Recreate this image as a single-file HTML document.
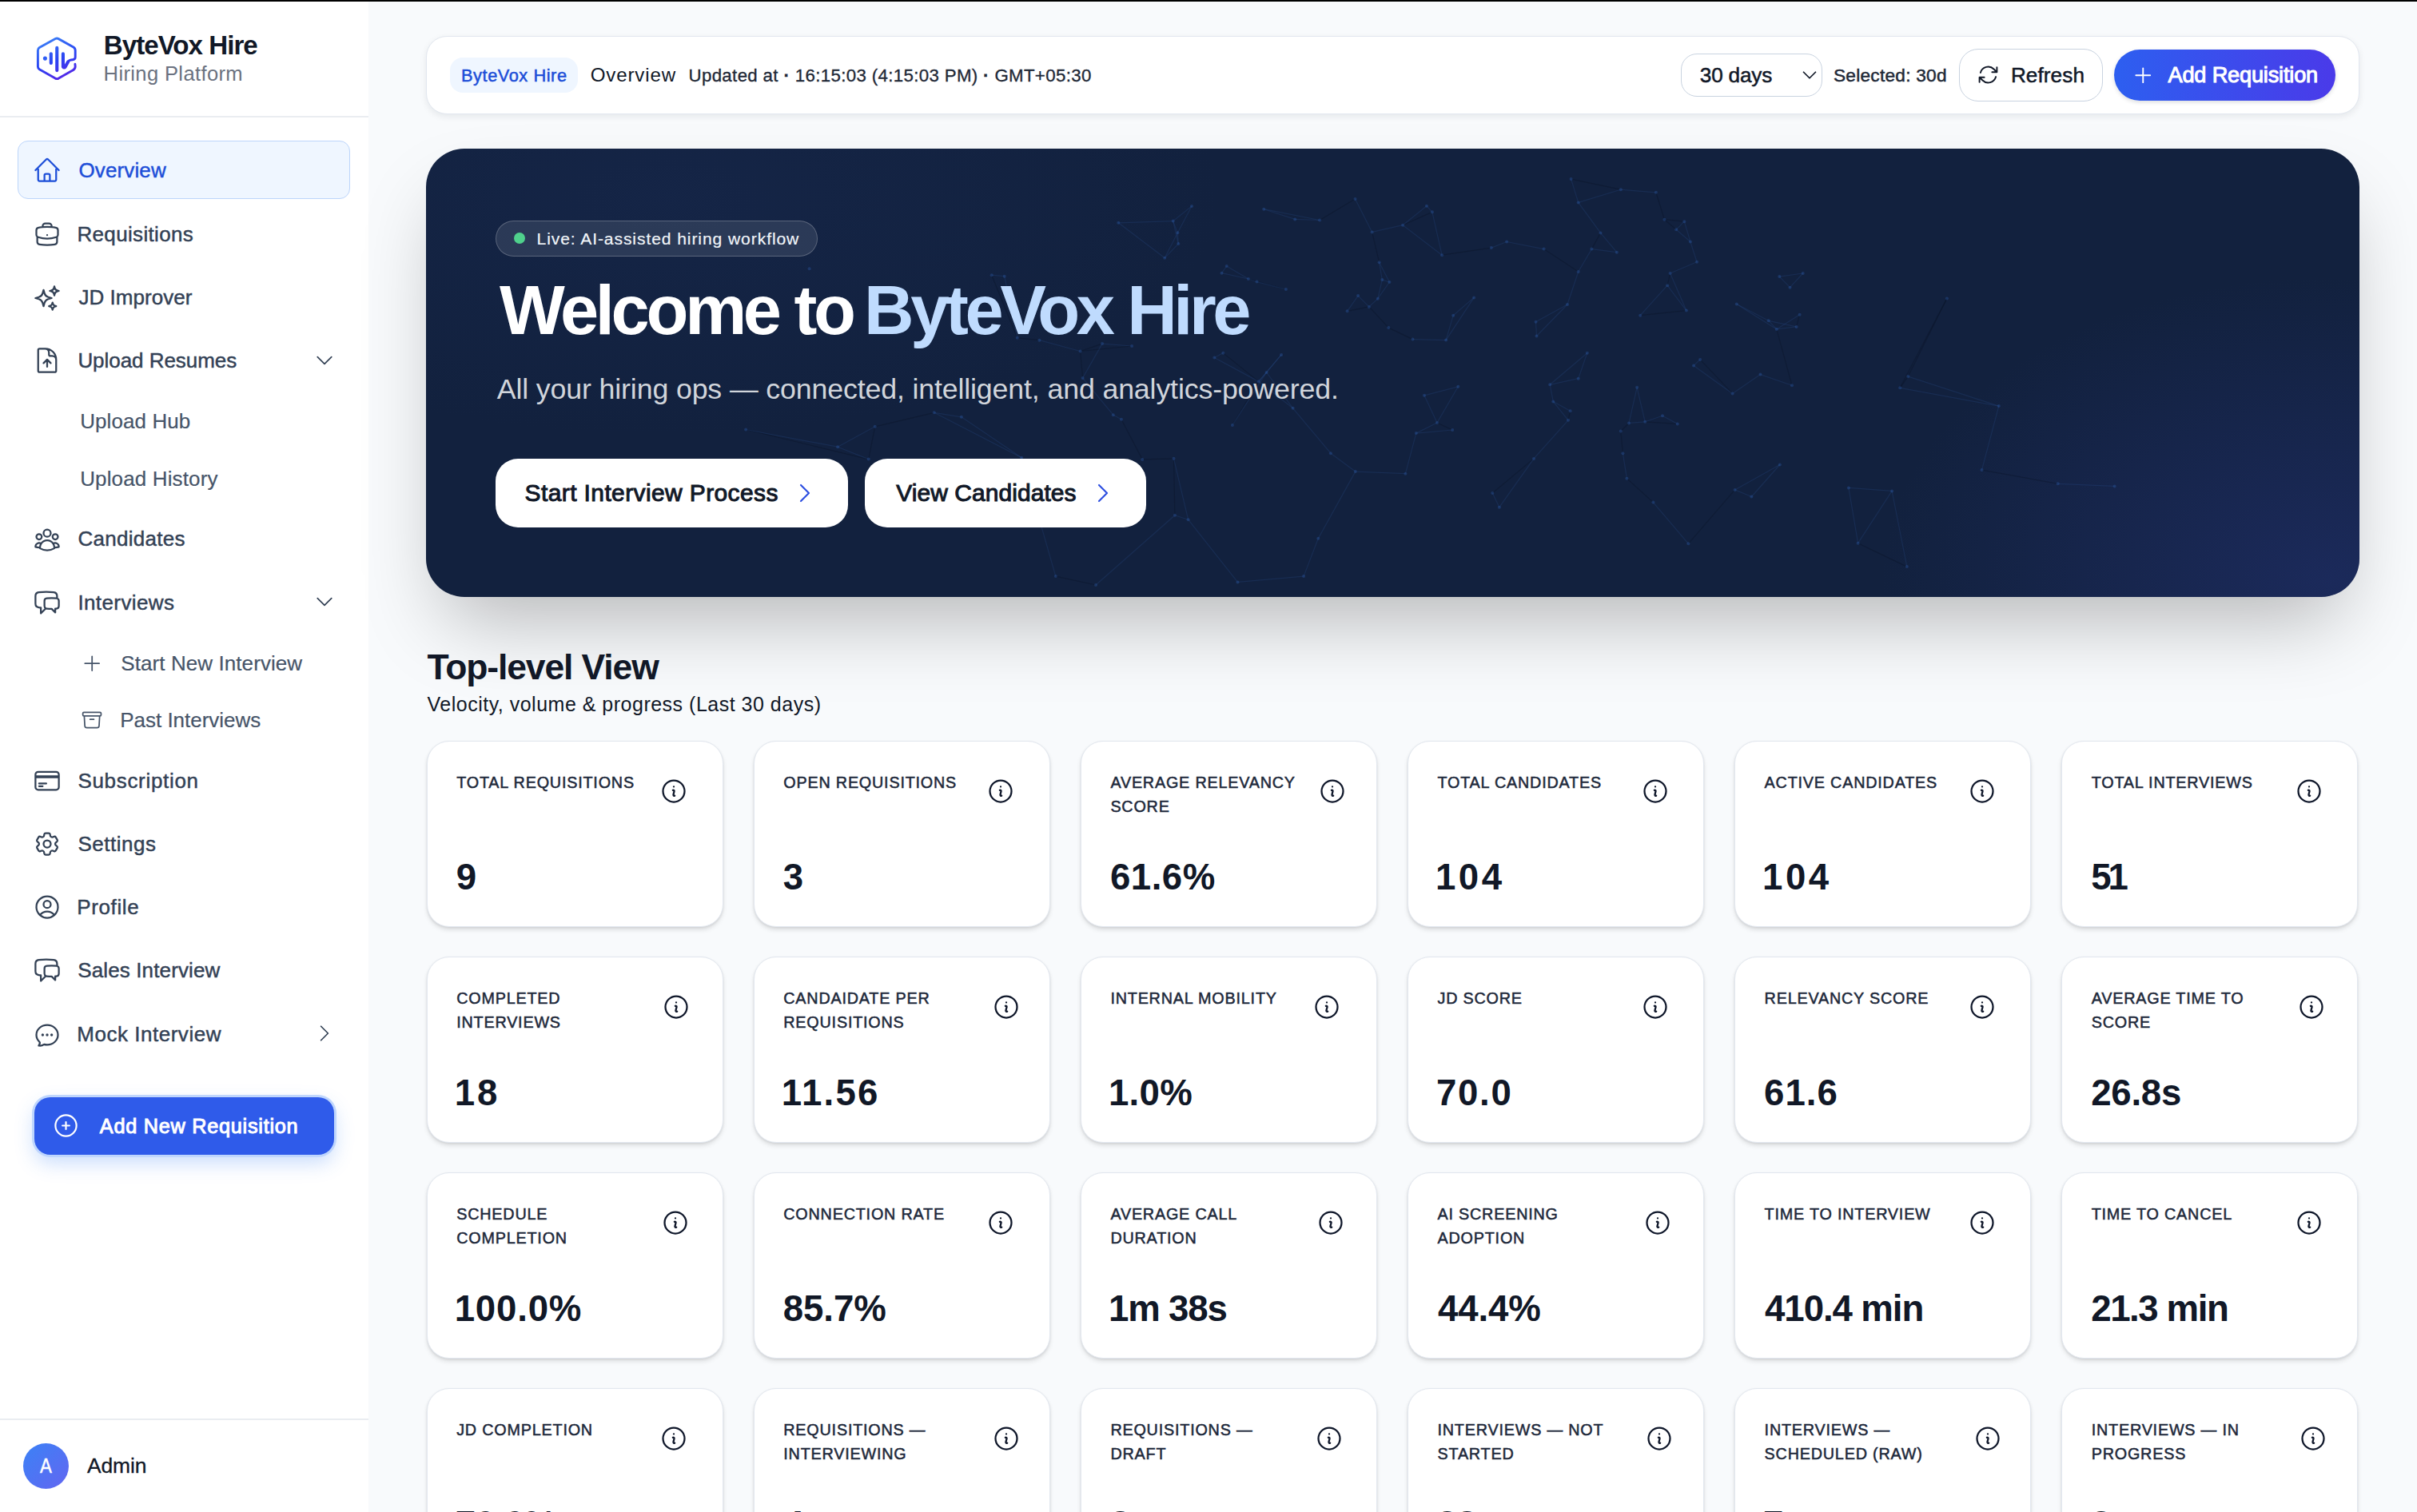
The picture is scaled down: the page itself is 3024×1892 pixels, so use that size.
<!DOCTYPE html><html><head><meta charset="utf-8"><style>
html,body{margin:0;padding:0;width:3024px;height:1892px;overflow:hidden}
body{background:#f8fafc;font-family:"Liberation Sans",sans-serif;position:relative}
.a{position:absolute}
.tx{position:absolute;white-space:nowrap;font-family:"Liberation Sans",sans-serif}
svg.i{position:absolute;fill:none;stroke-linecap:round;stroke-linejoin:round}
.card{position:absolute;background:#fff;border-radius:28px;box-sizing:border-box;border:1px solid #e2e7ef;box-shadow:0 4px 6px -1px rgba(0,0,0,.13),0 1px 3px rgba(0,0,0,.08)}

</style></head><body>
<div class="a" style="left:0;top:0;width:3024px;height:2px;background:#000;z-index:50"></div>
<div class="a" style="left:0;top:0;width:461px;height:1892px;background:#fff"></div>
<div class="a" style="left:0;top:145px;width:461px;height:2px;background:#eaedf1"></div>
<div class="a" style="left:0;top:1775px;width:461px;height:2px;background:#eaedf1"></div>
<svg class="a" style="left:40px;top:40px" width="70" height="70" viewBox="0 0 70 70"><defs><linearGradient id="lg" gradientUnits="userSpaceOnUse" x1="22" y1="8" x2="44" y2="60"><stop offset="0" stop-color="#3a7cf6"/><stop offset=".5" stop-color="#2a44f2"/><stop offset="1" stop-color="#5a22e6"/></linearGradient></defs>
<g fill="none" stroke="url(#lg)" stroke-linecap="round" stroke-linejoin="round">
<path stroke-width="2.9" d="M53.9 40.3 L54.2 43.1 Q54.2 46.6 50.9 48.1 L33.3 58.1 Q31.25 59.2 29.2 58.1 L9.3 46.8 Q7.4 45.6 7.4 43.6 L7.4 23.1 Q7.4 20.6 9.3 19.4 L29.2 8.6 Q31.25 7.5 33.3 8.6 L51.9 19 Q54.2 20.4 54.2 23 L54.2 31.5 Q54.2 34.5 50.9 34.7 L48.6 35 Q46.3 35.3 45.2 37.3"/>
<path stroke-width="4.1" d="M45.2 37.3 L41.7 43.5 Q40.3 45.6 38.9 43.5 L38.9 27.3"/>
<path stroke-width="4.1" d="M23.8 27.3 V38.9"/><path stroke-width="4.1" d="M31.25 19.9 V48.1"/>
</g><circle cx="16.4" cy="33.1" r="2.55" fill="#2f5ef5"/></svg>
<div class="a" style="left:22px;top:176px;width:416px;height:73px;box-sizing:border-box;border:1px solid #bcd5fb;background:#eff6ff;border-radius:13px"></div>
<svg class="i" style="left:40.5px;top:195px;" width="36" height="36" viewBox="0 0 24 24" stroke="#1d4ed8" stroke-width="1.5"><path d="m2.25 12 8.954-8.955c.44-.439 1.152-.439 1.591 0L21.75 12M4.5 9.75v10.125c0 .621.504 1.125 1.125 1.125H9.75v-4.875c0-.621.504-1.125 1.125-1.125h2.25c.621 0 1.125.504 1.125 1.125V21h4.125c.621 0 1.125-.504 1.125-1.125V9.75M8.25 21h8.25"/></svg>
<svg class="i" style="left:40.5px;top:275px;" width="36" height="36" viewBox="0 0 24 24" stroke="#334155" stroke-width="1.5"><path d="M20.25 14.15v4.25c0 1.094-.787 2.036-1.872 2.18-2.087.277-4.216.42-6.378.42s-4.291-.143-6.378-.42c-1.085-.144-1.872-1.086-1.872-2.18v-4.25m16.5 0a2.18 2.18 0 0 0 .75-1.661V8.706c0-1.081-.768-2.015-1.837-2.175a48.114 48.114 0 0 0-3.413-.387m4.5 8.006c-.194.165-.42.295-.673.38A23.978 23.978 0 0 1 12 15.75c-2.648 0-5.195-.429-7.577-1.22a2.016 2.016 0 0 1-.673-.38m0 0A2.18 2.18 0 0 1 3 12.489V8.706c0-1.081.768-2.015 1.837-2.175a48.111 48.111 0 0 1 3.413-.387m7.5 0V5.25A2.25 2.25 0 0 0 13.5 3h-3a2.25 2.25 0 0 0-2.25 2.25v.894m7.5 0a48.667 48.667 0 0 0-7.5 0M12 12.75h.008v.008H12v-.008Z"/></svg>
<svg class="i" style="left:40.5px;top:354.5px;" width="36" height="36" viewBox="0 0 24 24" stroke="#334155" stroke-width="1.5"><path d="M9.813 15.904 9 18.75l-.813-2.846a4.5 4.5 0 0 0-3.09-3.09L2.25 12l2.846-.813a4.5 4.5 0 0 0 3.09-3.09L9 5.25l.813 2.846a4.5 4.5 0 0 0 3.09 3.09L15.75 12l-2.846.813a4.5 4.5 0 0 0-3.09 3.09ZM18.259 8.715 18 9.75l-.259-1.035a3.375 3.375 0 0 0-2.455-2.456L14.25 6l1.036-.259a3.375 3.375 0 0 0 2.455-2.456L18 2.25l.259 1.035a3.375 3.375 0 0 0 2.456 2.456L21.75 6l-1.035.259a3.375 3.375 0 0 0-2.456 2.456ZM16.894 20.567 16.5 21.75l-.394-1.183a2.25 2.25 0 0 0-1.423-1.423L13.5 18.75l1.183-.394a2.25 2.25 0 0 0 1.423-1.423l.394-1.183.394 1.183a2.25 2.25 0 0 0 1.423 1.423l1.183.394-1.183.394a2.25 2.25 0 0 0-1.423 1.423Z"/></svg>
<svg class="i" style="left:40.5px;top:432.5px;" width="36" height="36" viewBox="0 0 24 24" stroke="#334155" stroke-width="1.5"><path d="M19.5 14.25v-2.625a3.375 3.375 0 0 0-3.375-3.375h-1.5A1.125 1.125 0 0 1 13.5 7.125v-1.5a3.375 3.375 0 0 0-3.375-3.375H8.25m6.75 12-3-3m0 0-3 3m3-3v6m-1.5-15H5.625c-.621 0-1.125.504-1.125 1.125v17.25c0 .621.504 1.125 1.125 1.125h12.75c.621 0 1.125-.504 1.125-1.125V11.25a9 9 0 0 0-9-9Z"/></svg>
<svg class="i" style="left:392.4px;top:436.9px;" width="28" height="28" viewBox="0 0 24 24" stroke="#334155" stroke-width="1.5"><path d="m19.5 8.25-7.5 7.5-7.5-7.5"/></svg>
<svg class="i" style="left:40.5px;top:656.5px;" width="36" height="36" viewBox="0 0 24 24" stroke="#334155" stroke-width="1.5"><path d="M18 18.72a9.094 9.094 0 0 0 3.741-.479 3 3 0 0 0-4.682-2.72m.94 3.198.001.031c0 .225-.012.447-.037.666A11.944 11.944 0 0 1 12 21c-2.17 0-4.207-.576-5.963-1.584A6.062 6.062 0 0 1 6 18.719m12 0a5.971 5.971 0 0 0-.941-3.197m0 0A5.995 5.995 0 0 0 12 12.75a5.995 5.995 0 0 0-5.058 2.772m0 0a3 3 0 0 0-4.681 2.72 8.986 8.986 0 0 0 3.74.477m.94-3.197a5.971 5.971 0 0 0-.94 3.197M15 6.75a3 3 0 1 1-6 0 3 3 0 0 1 6 0Zm6 3a2.25 2.25 0 1 1-4.5 0 2.25 2.25 0 0 1 4.5 0Zm-13.5 0a2.25 2.25 0 1 1-4.5 0 2.25 2.25 0 0 1 4.5 0Z"/></svg>
<svg class="i" style="left:40.5px;top:735.5px;" width="36" height="36" viewBox="0 0 24 24" stroke="#334155" stroke-width="1.5"><path d="M20.25 8.511c.884.284 1.5 1.128 1.5 2.097v4.286c0 1.136-.847 2.1-1.98 2.193-.34.027-.68.052-1.02.072v3.091l-3-3c-1.354 0-2.694-.055-4.02-.163a2.115 2.115 0 0 1-.825-.242m9.345-8.334a2.126 2.126 0 0 0-.476-.095 48.64 48.64 0 0 0-8.048 0c-1.131.094-1.976 1.057-1.976 2.192v4.286c0 .837.46 1.58 1.155 1.951m9.345-8.334V6.637c0-1.621-1.152-3.026-2.76-3.235A48.455 48.455 0 0 0 11.25 3c-2.115 0-4.198.137-6.24.402-1.608.209-2.76 1.614-2.76 3.235v6.226c0 1.621 1.152 3.026 2.76 3.235.577.075 1.157.14 1.74.194V21l4.155-4.155"/></svg>
<svg class="i" style="left:392.4px;top:739px;" width="28" height="28" viewBox="0 0 24 24" stroke="#334155" stroke-width="1.5"><path d="m19.5 8.25-7.5 7.5-7.5-7.5"/></svg>
<svg class="i" style="left:101.4px;top:815.6px;" width="28.4" height="28.4" viewBox="0 0 24 24" stroke="#475569" stroke-width="1.5"><path d="M12 4.5v15m7.5-7.5h-15"/></svg>
<svg class="i" style="left:101.2px;top:887.1px;" width="28.1" height="28.1" viewBox="0 0 24 24" stroke="#475569" stroke-width="1.5"><path d="m20.25 7.5-.625 10.632a2.25 2.25 0 0 1-2.247 2.118H6.622a2.25 2.25 0 0 1-2.247-2.118L3.75 7.5M10 11.25h4M3.375 7.5h17.25c.621 0 1.125-.504 1.125-1.125v-1.5c0-.621-.504-1.125-1.125-1.125H3.375c-.621 0-1.125.504-1.125 1.125v1.5c0 .621.504 1.125 1.125 1.125Z"/></svg>
<svg class="i" style="left:40.5px;top:958.5px;" width="36" height="36" viewBox="0 0 24 24" stroke="#334155" stroke-width="1.5"><path d="M2.25 8.25h19.5M2.25 9h19.5m-16.5 5.25h6m-6 2.25h3m-3.75 3h15a2.25 2.25 0 0 0 2.25-2.25V6.75A2.25 2.25 0 0 0 19.5 4.5h-15a2.25 2.25 0 0 0-2.25 2.25v10.5A2.25 2.25 0 0 0 4.5 19.5Z"/></svg>
<svg class="i" style="left:40.5px;top:1038px;" width="36" height="36" viewBox="0 0 24 24" stroke="#334155" stroke-width="1.5"><path d="M9.594 3.94c.09-.542.56-.94 1.11-.94h2.593c.55 0 1.02.398 1.11.94l.213 1.281c.063.374.313.686.645.87.074.04.147.083.22.127.325.196.72.257 1.075.124l1.217-.456a1.125 1.125 0 0 1 1.37.49l1.296 2.247a1.125 1.125 0 0 1-.26 1.431l-1.003.827c-.293.241-.438.613-.43.992a7.723 7.723 0 0 1 0 .255c-.008.378.137.75.43.991l1.004.827c.424.35.534.955.26 1.43l-1.298 2.247a1.125 1.125 0 0 1-1.369.491l-1.217-.456c-.355-.133-.75-.072-1.076.124a6.47 6.47 0 0 1-.22.128c-.331.183-.581.495-.644.869l-.213 1.281c-.09.543-.56.94-1.11.94h-2.594c-.55 0-1.019-.398-1.11-.94l-.213-1.281c-.062-.374-.312-.686-.644-.87a6.52 6.52 0 0 1-.22-.127c-.325-.196-.72-.257-1.076-.124l-1.217.456a1.125 1.125 0 0 1-1.369-.49l-1.297-2.247a1.125 1.125 0 0 1 .26-1.431l1.004-.827c.292-.24.437-.613.43-.991a6.932 6.932 0 0 1 0-.255c.007-.38-.138-.751-.43-.992l-1.004-.827a1.125 1.125 0 0 1-.26-1.43l1.297-2.247a1.125 1.125 0 0 1 1.37-.491l1.216.456c.356.133.751.072 1.076-.124.072-.044.146-.086.22-.128.332-.183.582-.495.644-.869l.214-1.28Z M15 12a3 3 0 1 1-6 0 3 3 0 0 1 6 0Z"/></svg>
<svg class="i" style="left:40.5px;top:1117px;" width="36" height="36" viewBox="0 0 24 24" stroke="#334155" stroke-width="1.5"><path d="M17.982 18.725A7.488 7.488 0 0 0 12 15.75a7.488 7.488 0 0 0-5.982 2.975m11.963 0a9 9 0 1 0-11.963 0m11.963 0A8.966 8.966 0 0 1 12 21a8.966 8.966 0 0 1-5.982-2.275M15 9.75a3 3 0 1 1-6 0 3 3 0 0 1 6 0Z"/></svg>
<svg class="i" style="left:40.5px;top:1196px;" width="36" height="36" viewBox="0 0 24 24" stroke="#334155" stroke-width="1.5"><path d="M20.25 8.511c.884.284 1.5 1.128 1.5 2.097v4.286c0 1.136-.847 2.1-1.98 2.193-.34.027-.68.052-1.02.072v3.091l-3-3c-1.354 0-2.694-.055-4.02-.163a2.115 2.115 0 0 1-.825-.242m9.345-8.334a2.126 2.126 0 0 0-.476-.095 48.64 48.64 0 0 0-8.048 0c-1.131.094-1.976 1.057-1.976 2.192v4.286c0 .837.46 1.58 1.155 1.951m9.345-8.334V6.637c0-1.621-1.152-3.026-2.76-3.235A48.455 48.455 0 0 0 11.25 3c-2.115 0-4.198.137-6.24.402-1.608.209-2.76 1.614-2.76 3.235v6.226c0 1.621 1.152 3.026 2.76 3.235.577.075 1.157.14 1.74.194V21l4.155-4.155"/></svg>
<svg class="i" style="left:40.5px;top:1277px;" width="36" height="36" viewBox="0 0 24 24" stroke="#334155" stroke-width="1.5"><path d="M8.625 12a.375.375 0 1 1-.75 0 .375.375 0 0 1 .75 0Zm0 0H8.25m4.125 0a.375.375 0 1 1-.75 0 .375.375 0 0 1 .75 0Zm0 0H12m4.125 0a.375.375 0 1 1-.75 0 .375.375 0 0 1 .75 0Zm0 0h-.375M21 12c0 4.556-4.03 8.25-9 8.25a9.764 9.764 0 0 1-2.555-.337A5.972 5.972 0 0 1 5.41 20.97a5.969 5.969 0 0 1-.474-.065 4.48 4.48 0 0 0 .978-2.025c.09-.457-.133-.901-.467-1.226C3.93 16.178 3 14.189 3 12c0-4.556 4.03-8.25 9-8.25s9 3.694 9 8.25Z"/></svg>
<svg class="i" style="left:392px;top:1279.4px;" width="28" height="28" viewBox="0 0 24 24" stroke="#334155" stroke-width="1.5"><path d="m8.25 4.5 7.5 7.5-7.5 7.5"/></svg>
<div class="a" style="left:43px;top:1373px;width:375px;height:72px;background:#2f5bea;border-radius:20px;box-shadow:0 0 0 3px #bfd6fd,0 10px 24px rgba(59,130,246,.28)"></div>
<svg class="i" style="left:65.3px;top:1391.2px;" width="35" height="35" viewBox="0 0 24 24" stroke="#ffffff" stroke-width="1.5"><path d="M12 9v6m3-3H9m12 0a9 9 0 1 1-18 0 9 9 0 0 1 18 0Z"/></svg>
<div class="a" style="left:29px;top:1806px;width:57px;height:57px;border-radius:50%;background:linear-gradient(135deg,#3b82f6,#6366f1)"></div>
<div class="a" style="left:533px;top:45px;width:2419px;height:98px;background:#fff;border-radius:26px;box-sizing:border-box;border:1px solid #e2e7ef;box-shadow:0 3px 8px rgba(15,23,42,.08)"></div>
<div class="a" style="left:563px;top:72px;width:160px;height:44px;background:#eff6ff;border-radius:16px"></div>
<div class="a" style="left:2103px;top:67px;width:177px;height:54px;box-sizing:border-box;border:1.5px solid #c9d3e0;border-radius:20px;background:#fff"></div>
<svg class="i" style="left:2251.75px;top:82px;" width="24" height="24" viewBox="0 0 24 24" stroke="#111827" stroke-width="1.7"><path d="m19.5 8.25-7.5 7.5-7.5-7.5"/></svg>
<div class="a" style="left:2451px;top:61px;width:180px;height:66px;box-sizing:border-box;border:1.5px solid #c9d3e0;border-radius:24px;background:#fff"></div>
<svg class="i" style="left:2472.8px;top:78.9px;" width="29" height="29" viewBox="0 0 24 24" stroke="#111827" stroke-width="1.6"><path d="M16.023 9.348h4.992v-.001M2.985 19.644v-4.992m0 0h4.992m-4.993 0 3.181 3.183a8.25 8.25 0 0 0 13.803-3.7M4.031 9.865a8.25 8.25 0 0 1 13.803-3.7l3.181 3.182m0-4.991v4.99"/></svg>
<div class="a" style="left:2645px;top:62px;width:277px;height:64px;border-radius:32px;background:linear-gradient(90deg,#2d5ff0,#4a3ae9);box-shadow:0 2px 5px rgba(30,41,59,.16)"></div>
<svg class="i" style="left:2667.2px;top:80.4px;" width="28.5" height="28.5" viewBox="0 0 24 24" stroke="#ffffff" stroke-width="1.6"><path d="M12 4.5v15m7.5-7.5h-15"/></svg>
<div class="a" style="left:533px;top:186px;width:2419px;height:561px;border-radius:48px;overflow:hidden;background:#12213e;box-shadow:0 50px 100px -24px rgba(0,0,0,.28)"><div class="a" style="left:0;top:0;width:100%;height:100%;background:radial-gradient(ellipse 560px 380px at 2380px 540px,rgba(40,54,130,.42),rgba(40,54,130,0) 100%)"></div><div class="a" style="left:0;top:0;width:100%;height:100%;background:radial-gradient(ellipse 700px 300px at 300px 60px,rgba(30,50,100,.22),rgba(30,50,100,0) 100%)"></div><svg class="a" style="left:0;top:0" width="2419" height="561"><line x1="1432.6" y1="38.1" x2="1494.8" y2="51.2" stroke="#070d1c" stroke-opacity="0.28" stroke-width="1.2"/><line x1="1432.6" y1="38.1" x2="1441.7" y2="67.4" stroke="#3a6ab8" stroke-opacity="0.16" stroke-width="1.2"/><line x1="1494.8" y1="51.2" x2="1441.7" y2="67.4" stroke="#3a6ab8" stroke-opacity="0.16" stroke-width="1.2"/><line x1="1494.8" y1="51.2" x2="1538.9" y2="54.8" stroke="#3a6ab8" stroke-opacity="0.16" stroke-width="1.2"/><line x1="1441.7" y1="67.4" x2="1469.5" y2="105.4" stroke="#3a6ab8" stroke-opacity="0.16" stroke-width="1.2"/><line x1="1538.9" y1="54.8" x2="1549.5" y2="88.7" stroke="#070d1c" stroke-opacity="0.28" stroke-width="1.2"/><line x1="1469.5" y1="105.4" x2="1458.4" y2="125.6" stroke="#070d1c" stroke-opacity="0.28" stroke-width="1.2"/><line x1="1469.5" y1="105.4" x2="1489.8" y2="129.7" stroke="#3a6ab8" stroke-opacity="0.16" stroke-width="1.2"/><line x1="1549.5" y1="88.7" x2="1574.3" y2="91.2" stroke="#070d1c" stroke-opacity="0.28" stroke-width="1.2"/><line x1="1549.5" y1="88.7" x2="1564.2" y2="101.3" stroke="#070d1c" stroke-opacity="0.28" stroke-width="1.2"/><line x1="1574.3" y1="91.2" x2="1564.2" y2="101.3" stroke="#3a6ab8" stroke-opacity="0.16" stroke-width="1.2"/><line x1="1574.3" y1="91.2" x2="1581.9" y2="116.5" stroke="#3a6ab8" stroke-opacity="0.16" stroke-width="1.2"/><line x1="1564.2" y1="101.3" x2="1581.9" y2="116.5" stroke="#3a6ab8" stroke-opacity="0.16" stroke-width="1.2"/><line x1="1581.9" y1="116.5" x2="1590.0" y2="141.8" stroke="#3a6ab8" stroke-opacity="0.16" stroke-width="1.2"/><line x1="1590.0" y1="141.8" x2="1556.6" y2="156.0" stroke="#3a6ab8" stroke-opacity="0.16" stroke-width="1.2"/><line x1="1556.6" y1="156.0" x2="1553.1" y2="171.2" stroke="#070d1c" stroke-opacity="0.28" stroke-width="1.2"/><line x1="1556.6" y1="156.0" x2="1576.9" y2="202.6" stroke="#3a6ab8" stroke-opacity="0.16" stroke-width="1.2"/><line x1="1553.1" y1="171.2" x2="1576.9" y2="202.6" stroke="#3a6ab8" stroke-opacity="0.16" stroke-width="1.2"/><line x1="1553.1" y1="171.2" x2="1519.2" y2="208.7" stroke="#3a6ab8" stroke-opacity="0.16" stroke-width="1.2"/><line x1="1352.1" y1="116.5" x2="1398.6" y2="125.6" stroke="#3a6ab8" stroke-opacity="0.16" stroke-width="1.2"/><line x1="1352.1" y1="116.5" x2="1332.8" y2="124.1" stroke="#3a6ab8" stroke-opacity="0.16" stroke-width="1.2"/><line x1="1398.6" y1="125.6" x2="1441.7" y2="154.0" stroke="#070d1c" stroke-opacity="0.28" stroke-width="1.2"/><line x1="1458.4" y1="125.6" x2="1489.8" y2="129.7" stroke="#3a6ab8" stroke-opacity="0.16" stroke-width="1.2"/><line x1="1458.4" y1="125.6" x2="1441.7" y2="154.0" stroke="#3a6ab8" stroke-opacity="0.16" stroke-width="1.2"/><line x1="1441.7" y1="154.0" x2="1428.0" y2="195.0" stroke="#3a6ab8" stroke-opacity="0.16" stroke-width="1.2"/><line x1="1332.8" y1="124.1" x2="1271.1" y2="133.2" stroke="#070d1c" stroke-opacity="0.28" stroke-width="1.2"/><line x1="1271.1" y1="133.2" x2="1258.9" y2="79.3" stroke="#3a6ab8" stroke-opacity="0.16" stroke-width="1.2"/><line x1="1271.1" y1="133.2" x2="1222.1" y2="95.7" stroke="#3a6ab8" stroke-opacity="0.16" stroke-width="1.2"/><line x1="1693.3" y1="160.1" x2="1722.7" y2="156.0" stroke="#3a6ab8" stroke-opacity="0.16" stroke-width="1.2"/><line x1="1693.3" y1="160.1" x2="1706.5" y2="173.7" stroke="#3a6ab8" stroke-opacity="0.16" stroke-width="1.2"/><line x1="1722.7" y1="156.0" x2="1706.5" y2="173.7" stroke="#3a6ab8" stroke-opacity="0.16" stroke-width="1.2"/><line x1="1679.7" y1="215.3" x2="1689.8" y2="225.9" stroke="#3a6ab8" stroke-opacity="0.16" stroke-width="1.2"/><line x1="1679.7" y1="215.3" x2="1714.6" y2="222.9" stroke="#3a6ab8" stroke-opacity="0.16" stroke-width="1.2"/><line x1="1679.7" y1="215.3" x2="1639.7" y2="194.5" stroke="#3a6ab8" stroke-opacity="0.16" stroke-width="1.2"/><line x1="1689.8" y1="225.9" x2="1714.6" y2="222.9" stroke="#3a6ab8" stroke-opacity="0.16" stroke-width="1.2"/><line x1="1689.8" y1="225.9" x2="1718.6" y2="207.7" stroke="#3a6ab8" stroke-opacity="0.16" stroke-width="1.2"/><line x1="1689.8" y1="225.9" x2="1639.7" y2="194.5" stroke="#3a6ab8" stroke-opacity="0.16" stroke-width="1.2"/><line x1="1689.8" y1="225.9" x2="1709.0" y2="296.3" stroke="#070d1c" stroke-opacity="0.28" stroke-width="1.2"/><line x1="1714.6" y1="222.9" x2="1718.6" y2="207.7" stroke="#070d1c" stroke-opacity="0.28" stroke-width="1.2"/><line x1="1576.9" y1="202.6" x2="1519.2" y2="208.7" stroke="#070d1c" stroke-opacity="0.28" stroke-width="1.2"/><line x1="1428.0" y1="195.0" x2="1388.5" y2="216.8" stroke="#3a6ab8" stroke-opacity="0.16" stroke-width="1.2"/><line x1="1428.0" y1="195.0" x2="1389.5" y2="234.5" stroke="#3a6ab8" stroke-opacity="0.16" stroke-width="1.2"/><line x1="1311.1" y1="186.4" x2="1285.2" y2="208.7" stroke="#3a6ab8" stroke-opacity="0.16" stroke-width="1.2"/><line x1="1311.1" y1="186.4" x2="1276.1" y2="239.6" stroke="#3a6ab8" stroke-opacity="0.16" stroke-width="1.2"/><line x1="1285.2" y1="208.7" x2="1276.1" y2="239.6" stroke="#3a6ab8" stroke-opacity="0.16" stroke-width="1.2"/><line x1="1276.1" y1="239.6" x2="1234.5" y2="238.6" stroke="#3a6ab8" stroke-opacity="0.16" stroke-width="1.2"/><line x1="1291.3" y1="297.8" x2="1249.0" y2="308.8" stroke="#3a6ab8" stroke-opacity="0.16" stroke-width="1.2"/><line x1="1291.3" y1="297.8" x2="1265.0" y2="343.0" stroke="#3a6ab8" stroke-opacity="0.16" stroke-width="1.2"/><line x1="1452.8" y1="255.8" x2="1441.7" y2="287.7" stroke="#3a6ab8" stroke-opacity="0.16" stroke-width="1.2"/><line x1="1452.8" y1="255.8" x2="1406.2" y2="295.3" stroke="#3a6ab8" stroke-opacity="0.16" stroke-width="1.2"/><line x1="1441.7" y1="287.7" x2="1406.2" y2="295.3" stroke="#3a6ab8" stroke-opacity="0.16" stroke-width="1.2"/><line x1="1515.1" y1="298.8" x2="1505.0" y2="343.4" stroke="#3a6ab8" stroke-opacity="0.16" stroke-width="1.2"/><line x1="1515.1" y1="298.8" x2="1525.2" y2="341.8" stroke="#3a6ab8" stroke-opacity="0.16" stroke-width="1.2"/><line x1="1586.0" y1="271.5" x2="1594.1" y2="263.9" stroke="#3a6ab8" stroke-opacity="0.16" stroke-width="1.2"/><line x1="1586.0" y1="271.5" x2="1634.6" y2="306.4" stroke="#3a6ab8" stroke-opacity="0.16" stroke-width="1.2"/><line x1="1594.1" y1="263.9" x2="1634.6" y2="306.4" stroke="#070d1c" stroke-opacity="0.28" stroke-width="1.2"/><line x1="1634.6" y1="306.4" x2="1669.5" y2="282.6" stroke="#3a6ab8" stroke-opacity="0.16" stroke-width="1.2"/><line x1="1709.0" y1="296.3" x2="1669.5" y2="282.6" stroke="#3a6ab8" stroke-opacity="0.16" stroke-width="1.2"/><line x1="1406.2" y1="295.3" x2="1410.3" y2="316.5" stroke="#3a6ab8" stroke-opacity="0.16" stroke-width="1.2"/><line x1="1410.3" y1="316.5" x2="1431.6" y2="328.2" stroke="#3a6ab8" stroke-opacity="0.16" stroke-width="1.2"/><line x1="1410.3" y1="316.5" x2="1429.0" y2="339.8" stroke="#3a6ab8" stroke-opacity="0.16" stroke-width="1.2"/><line x1="1431.6" y1="328.2" x2="1429.0" y2="339.8" stroke="#070d1c" stroke-opacity="0.28" stroke-width="1.2"/><line x1="1429.0" y1="339.8" x2="1386.0" y2="387.9" stroke="#3a6ab8" stroke-opacity="0.16" stroke-width="1.2"/><line x1="1505.0" y1="343.4" x2="1525.2" y2="341.8" stroke="#3a6ab8" stroke-opacity="0.16" stroke-width="1.2"/><line x1="1505.0" y1="343.4" x2="1494.8" y2="353.5" stroke="#070d1c" stroke-opacity="0.28" stroke-width="1.2"/><line x1="1525.2" y1="341.8" x2="1565.7" y2="344.4" stroke="#070d1c" stroke-opacity="0.28" stroke-width="1.2"/><line x1="1525.2" y1="341.8" x2="1547.0" y2="334.3" stroke="#3a6ab8" stroke-opacity="0.16" stroke-width="1.2"/><line x1="1565.7" y1="344.4" x2="1547.0" y2="334.3" stroke="#3a6ab8" stroke-opacity="0.16" stroke-width="1.2"/><line x1="1494.8" y1="353.5" x2="1497.4" y2="381.3" stroke="#070d1c" stroke-opacity="0.28" stroke-width="1.2"/><line x1="1497.4" y1="381.3" x2="1502.4" y2="412.7" stroke="#3a6ab8" stroke-opacity="0.16" stroke-width="1.2"/><line x1="1284.2" y1="352.0" x2="1238.8" y2="356.1" stroke="#3a6ab8" stroke-opacity="0.16" stroke-width="1.2"/><line x1="1284.2" y1="352.0" x2="1265.0" y2="343.0" stroke="#070d1c" stroke-opacity="0.28" stroke-width="1.2"/><line x1="1386.0" y1="387.9" x2="1334.3" y2="431.0" stroke="#070d1c" stroke-opacity="0.28" stroke-width="1.2"/><line x1="1386.0" y1="387.9" x2="1342.9" y2="448.7" stroke="#3a6ab8" stroke-opacity="0.16" stroke-width="1.2"/><line x1="1334.3" y1="431.0" x2="1342.9" y2="448.7" stroke="#3a6ab8" stroke-opacity="0.16" stroke-width="1.2"/><line x1="1502.4" y1="412.7" x2="1535.4" y2="442.6" stroke="#070d1c" stroke-opacity="0.28" stroke-width="1.2"/><line x1="1535.4" y1="442.6" x2="1579.4" y2="494.3" stroke="#3a6ab8" stroke-opacity="0.16" stroke-width="1.2"/><line x1="1579.4" y1="494.3" x2="1637.6" y2="426.9" stroke="#070d1c" stroke-opacity="0.28" stroke-width="1.2"/><line x1="1658.4" y1="435.5" x2="1637.6" y2="426.9" stroke="#3a6ab8" stroke-opacity="0.16" stroke-width="1.2"/><line x1="1658.4" y1="435.5" x2="1693.8" y2="395.5" stroke="#3a6ab8" stroke-opacity="0.16" stroke-width="1.2"/><line x1="1637.6" y1="426.9" x2="1693.8" y2="395.5" stroke="#3a6ab8" stroke-opacity="0.16" stroke-width="1.2"/><line x1="1779.9" y1="424.4" x2="1834.1" y2="428.4" stroke="#3a6ab8" stroke-opacity="0.16" stroke-width="1.2"/><line x1="1779.9" y1="424.4" x2="1791.6" y2="493.7" stroke="#3a6ab8" stroke-opacity="0.16" stroke-width="1.2"/><line x1="1834.1" y1="428.4" x2="1791.6" y2="493.7" stroke="#3a6ab8" stroke-opacity="0.16" stroke-width="1.2"/><line x1="1834.1" y1="428.4" x2="1852.8" y2="523.1" stroke="#3a6ab8" stroke-opacity="0.16" stroke-width="1.2"/><line x1="1791.6" y1="493.7" x2="1852.8" y2="523.1" stroke="#070d1c" stroke-opacity="0.28" stroke-width="1.2"/><line x1="1844.2" y1="299.3" x2="1967.8" y2="322.1" stroke="#3a6ab8" stroke-opacity="0.16" stroke-width="1.2"/><line x1="1844.2" y1="299.3" x2="1854.3" y2="285.1" stroke="#070d1c" stroke-opacity="0.28" stroke-width="1.2"/><line x1="1844.2" y1="299.3" x2="1902.9" y2="187.4" stroke="#070d1c" stroke-opacity="0.28" stroke-width="1.2"/><line x1="1967.8" y1="322.1" x2="1854.3" y2="285.1" stroke="#3a6ab8" stroke-opacity="0.16" stroke-width="1.2"/><line x1="1967.8" y1="322.1" x2="1946.5" y2="402.1" stroke="#3a6ab8" stroke-opacity="0.16" stroke-width="1.2"/><line x1="1854.3" y1="285.1" x2="1902.9" y2="187.4" stroke="#070d1c" stroke-opacity="0.28" stroke-width="1.2"/><line x1="1946.5" y1="402.1" x2="2041.7" y2="419.3" stroke="#070d1c" stroke-opacity="0.28" stroke-width="1.2"/><line x1="2041.7" y1="419.3" x2="2112.6" y2="422.4" stroke="#3a6ab8" stroke-opacity="0.16" stroke-width="1.2"/><line x1="1388.5" y1="216.8" x2="1389.5" y2="234.5" stroke="#3a6ab8" stroke-opacity="0.16" stroke-width="1.2"/><line x1="866.3" y1="92.8" x2="934.7" y2="90.6" stroke="#3a6ab8" stroke-opacity="0.16" stroke-width="1.2"/><line x1="866.3" y1="92.8" x2="924.2" y2="136.8" stroke="#3a6ab8" stroke-opacity="0.16" stroke-width="1.2"/><line x1="934.7" y1="90.6" x2="958.0" y2="72.0" stroke="#3a6ab8" stroke-opacity="0.16" stroke-width="1.2"/><line x1="934.7" y1="90.6" x2="941.3" y2="119.0" stroke="#3a6ab8" stroke-opacity="0.16" stroke-width="1.2"/><line x1="934.7" y1="90.6" x2="940.4" y2="105.2" stroke="#3a6ab8" stroke-opacity="0.16" stroke-width="1.2"/><line x1="958.0" y1="72.0" x2="940.4" y2="105.2" stroke="#3a6ab8" stroke-opacity="0.16" stroke-width="1.2"/><line x1="941.3" y1="119.0" x2="924.2" y2="136.8" stroke="#3a6ab8" stroke-opacity="0.16" stroke-width="1.2"/><line x1="941.3" y1="119.0" x2="940.4" y2="105.2" stroke="#3a6ab8" stroke-opacity="0.16" stroke-width="1.2"/><line x1="924.2" y1="136.8" x2="940.4" y2="105.2" stroke="#3a6ab8" stroke-opacity="0.16" stroke-width="1.2"/><line x1="1001.7" y1="147.0" x2="995.5" y2="155.7" stroke="#3a6ab8" stroke-opacity="0.16" stroke-width="1.2"/><line x1="1001.7" y1="147.0" x2="1028.9" y2="163.0" stroke="#3a6ab8" stroke-opacity="0.16" stroke-width="1.2"/><line x1="995.5" y1="155.7" x2="1028.9" y2="163.0" stroke="#3a6ab8" stroke-opacity="0.16" stroke-width="1.2"/><line x1="1028.9" y1="163.0" x2="1039.5" y2="166.6" stroke="#3a6ab8" stroke-opacity="0.16" stroke-width="1.2"/><line x1="1028.9" y1="163.0" x2="1075.9" y2="176.1" stroke="#070d1c" stroke-opacity="0.28" stroke-width="1.2"/><line x1="1039.5" y1="166.6" x2="1075.9" y2="176.1" stroke="#3a6ab8" stroke-opacity="0.16" stroke-width="1.2"/><line x1="1048.2" y1="75.7" x2="1087.2" y2="88.4" stroke="#3a6ab8" stroke-opacity="0.16" stroke-width="1.2"/><line x1="1048.2" y1="75.7" x2="1118.1" y2="89.5" stroke="#3a6ab8" stroke-opacity="0.16" stroke-width="1.2"/><line x1="1087.2" y1="88.4" x2="1118.1" y2="89.5" stroke="#3a6ab8" stroke-opacity="0.16" stroke-width="1.2"/><line x1="1118.1" y1="89.5" x2="1162.5" y2="62.9" stroke="#070d1c" stroke-opacity="0.28" stroke-width="1.2"/><line x1="1183.6" y1="104.4" x2="1162.5" y2="62.9" stroke="#3a6ab8" stroke-opacity="0.16" stroke-width="1.2"/><line x1="1183.6" y1="104.4" x2="1222.1" y2="95.7" stroke="#3a6ab8" stroke-opacity="0.16" stroke-width="1.2"/><line x1="1183.6" y1="104.4" x2="1192.6" y2="142.2" stroke="#070d1c" stroke-opacity="0.28" stroke-width="1.2"/><line x1="1251.9" y1="71.7" x2="1258.9" y2="79.3" stroke="#3a6ab8" stroke-opacity="0.16" stroke-width="1.2"/><line x1="1251.9" y1="71.7" x2="1222.1" y2="95.7" stroke="#3a6ab8" stroke-opacity="0.16" stroke-width="1.2"/><line x1="1258.9" y1="79.3" x2="1222.1" y2="95.7" stroke="#070d1c" stroke-opacity="0.28" stroke-width="1.2"/><line x1="1192.6" y1="142.2" x2="1196.3" y2="164.1" stroke="#3a6ab8" stroke-opacity="0.16" stroke-width="1.2"/><line x1="1192.6" y1="142.2" x2="1205.4" y2="167.0" stroke="#3a6ab8" stroke-opacity="0.16" stroke-width="1.2"/><line x1="1196.3" y1="164.1" x2="1190.8" y2="187.7" stroke="#3a6ab8" stroke-opacity="0.16" stroke-width="1.2"/><line x1="1196.3" y1="164.1" x2="1205.4" y2="167.0" stroke="#3a6ab8" stroke-opacity="0.16" stroke-width="1.2"/><line x1="1179.9" y1="197.9" x2="1190.8" y2="187.7" stroke="#3a6ab8" stroke-opacity="0.16" stroke-width="1.2"/><line x1="1179.9" y1="197.9" x2="1166.1" y2="184.1" stroke="#3a6ab8" stroke-opacity="0.16" stroke-width="1.2"/><line x1="1179.9" y1="197.9" x2="1152.6" y2="203.3" stroke="#070d1c" stroke-opacity="0.28" stroke-width="1.2"/><line x1="1179.9" y1="197.9" x2="1204.3" y2="224.1" stroke="#070d1c" stroke-opacity="0.28" stroke-width="1.2"/><line x1="1190.8" y1="187.7" x2="1205.4" y2="167.0" stroke="#3a6ab8" stroke-opacity="0.16" stroke-width="1.2"/><line x1="1166.1" y1="184.1" x2="1152.6" y2="203.3" stroke="#3a6ab8" stroke-opacity="0.16" stroke-width="1.2"/><line x1="1234.5" y1="238.6" x2="1204.3" y2="224.1" stroke="#070d1c" stroke-opacity="0.28" stroke-width="1.2"/><line x1="1249.0" y1="308.8" x2="1265.0" y2="343.0" stroke="#3a6ab8" stroke-opacity="0.16" stroke-width="1.2"/><line x1="1238.8" y1="356.1" x2="1265.0" y2="343.0" stroke="#3a6ab8" stroke-opacity="0.16" stroke-width="1.2"/><line x1="1238.8" y1="356.1" x2="1225.4" y2="406.7" stroke="#3a6ab8" stroke-opacity="0.16" stroke-width="1.2"/><line x1="1225.4" y1="406.7" x2="1162.8" y2="404.1" stroke="#3a6ab8" stroke-opacity="0.16" stroke-width="1.2"/><line x1="1162.8" y1="404.1" x2="1131.9" y2="381.2" stroke="#3a6ab8" stroke-opacity="0.16" stroke-width="1.2"/><line x1="1162.8" y1="404.1" x2="1116.3" y2="487.8" stroke="#3a6ab8" stroke-opacity="0.16" stroke-width="1.2"/><line x1="1131.9" y1="381.2" x2="1084.6" y2="324.8" stroke="#3a6ab8" stroke-opacity="0.16" stroke-width="1.2"/><line x1="1116.3" y1="487.8" x2="1098.1" y2="535.1" stroke="#3a6ab8" stroke-opacity="0.16" stroke-width="1.2"/><line x1="1098.1" y1="535.1" x2="1015.5" y2="542.4" stroke="#3a6ab8" stroke-opacity="0.16" stroke-width="1.2"/><line x1="1015.5" y1="542.4" x2="953.6" y2="464.2" stroke="#3a6ab8" stroke-opacity="0.16" stroke-width="1.2"/><line x1="787.8" y1="535.1" x2="838.0" y2="546.0" stroke="#070d1c" stroke-opacity="0.28" stroke-width="1.2"/><line x1="787.8" y1="535.1" x2="745.2" y2="386.7" stroke="#3a6ab8" stroke-opacity="0.16" stroke-width="1.2"/><line x1="838.0" y1="546.0" x2="936.9" y2="458.7" stroke="#3a6ab8" stroke-opacity="0.16" stroke-width="1.2"/><line x1="936.9" y1="458.7" x2="953.6" y2="464.2" stroke="#3a6ab8" stroke-opacity="0.16" stroke-width="1.2"/><line x1="936.9" y1="458.7" x2="935.5" y2="387.8" stroke="#070d1c" stroke-opacity="0.28" stroke-width="1.2"/><line x1="953.6" y1="464.2" x2="935.5" y2="387.8" stroke="#3a6ab8" stroke-opacity="0.16" stroke-width="1.2"/><line x1="935.5" y1="387.8" x2="896.2" y2="388.9" stroke="#070d1c" stroke-opacity="0.28" stroke-width="1.2"/><line x1="896.2" y1="388.9" x2="870.0" y2="338.7" stroke="#070d1c" stroke-opacity="0.28" stroke-width="1.2"/><line x1="859.8" y1="333.2" x2="870.0" y2="338.7" stroke="#3a6ab8" stroke-opacity="0.16" stroke-width="1.2"/><line x1="859.8" y1="333.2" x2="821.6" y2="287.0" stroke="#3a6ab8" stroke-opacity="0.16" stroke-width="1.2"/><line x1="1008.9" y1="345.9" x2="1041.7" y2="291.4" stroke="#070d1c" stroke-opacity="0.28" stroke-width="1.2"/><line x1="1008.9" y1="345.9" x2="1051.6" y2="280.0" stroke="#3a6ab8" stroke-opacity="0.16" stroke-width="1.2"/><line x1="1084.6" y1="324.8" x2="1041.7" y2="291.4" stroke="#3a6ab8" stroke-opacity="0.16" stroke-width="1.2"/><line x1="1084.6" y1="324.8" x2="1051.6" y2="280.0" stroke="#3a6ab8" stroke-opacity="0.16" stroke-width="1.2"/><line x1="986.4" y1="261.5" x2="997.3" y2="255.7" stroke="#3a6ab8" stroke-opacity="0.16" stroke-width="1.2"/><line x1="986.4" y1="261.5" x2="1041.7" y2="291.4" stroke="#3a6ab8" stroke-opacity="0.16" stroke-width="1.2"/><line x1="997.3" y1="255.7" x2="1041.7" y2="291.4" stroke="#070d1c" stroke-opacity="0.28" stroke-width="1.2"/><line x1="1041.7" y1="291.4" x2="1070.1" y2="257.9" stroke="#3a6ab8" stroke-opacity="0.16" stroke-width="1.2"/><line x1="1041.7" y1="291.4" x2="1051.6" y2="280.0" stroke="#3a6ab8" stroke-opacity="0.16" stroke-width="1.2"/><line x1="1070.1" y1="257.9" x2="1051.6" y2="280.0" stroke="#3a6ab8" stroke-opacity="0.16" stroke-width="1.2"/><line x1="821.6" y1="287.0" x2="846.0" y2="244.1" stroke="#3a6ab8" stroke-opacity="0.16" stroke-width="1.2"/><line x1="821.6" y1="287.0" x2="818.6" y2="253.5" stroke="#070d1c" stroke-opacity="0.28" stroke-width="1.2"/><line x1="767.4" y1="239.7" x2="739.8" y2="236.8" stroke="#070d1c" stroke-opacity="0.28" stroke-width="1.2"/><line x1="767.4" y1="239.7" x2="818.6" y2="253.5" stroke="#3a6ab8" stroke-opacity="0.16" stroke-width="1.2"/><line x1="739.8" y1="236.8" x2="707.7" y2="158.2" stroke="#070d1c" stroke-opacity="0.28" stroke-width="1.2"/><line x1="739.8" y1="236.8" x2="723.7" y2="159.7" stroke="#3a6ab8" stroke-opacity="0.16" stroke-width="1.2"/><line x1="846.0" y1="244.1" x2="883.1" y2="247.0" stroke="#3a6ab8" stroke-opacity="0.16" stroke-width="1.2"/><line x1="846.0" y1="244.1" x2="818.6" y2="253.5" stroke="#070d1c" stroke-opacity="0.28" stroke-width="1.2"/><line x1="883.1" y1="247.0" x2="818.6" y2="253.5" stroke="#070d1c" stroke-opacity="0.28" stroke-width="1.2"/><line x1="707.7" y1="158.2" x2="723.7" y2="159.7" stroke="#3a6ab8" stroke-opacity="0.16" stroke-width="1.2"/><line x1="669.9" y1="335.8" x2="745.2" y2="386.7" stroke="#3a6ab8" stroke-opacity="0.16" stroke-width="1.2"/><line x1="669.9" y1="335.8" x2="635.8" y2="330.3" stroke="#3a6ab8" stroke-opacity="0.16" stroke-width="1.2"/><line x1="745.2" y1="386.7" x2="635.8" y2="330.3" stroke="#3a6ab8" stroke-opacity="0.16" stroke-width="1.2"/><line x1="635.8" y1="330.3" x2="561.7" y2="347.8" stroke="#070d1c" stroke-opacity="0.28" stroke-width="1.2"/><line x1="561.7" y1="347.8" x2="553.7" y2="388.6" stroke="#070d1c" stroke-opacity="0.28" stroke-width="1.2"/><line x1="561.7" y1="347.8" x2="515.1" y2="373.2" stroke="#3a6ab8" stroke-opacity="0.16" stroke-width="1.2"/><line x1="553.7" y1="388.6" x2="400.1" y2="351.5" stroke="#070d1c" stroke-opacity="0.28" stroke-width="1.2"/><line x1="553.7" y1="388.6" x2="515.1" y2="373.2" stroke="#3a6ab8" stroke-opacity="0.16" stroke-width="1.2"/><line x1="400.1" y1="351.5" x2="515.1" y2="373.2" stroke="#3a6ab8" stroke-opacity="0.16" stroke-width="1.2"/><circle cx="1432.6" cy="38.1" r="2" fill="#2f5fb0" fill-opacity=".35"/><circle cx="1494.8" cy="51.2" r="2" fill="#2f5fb0" fill-opacity=".35"/><circle cx="1441.7" cy="67.4" r="2" fill="#2f5fb0" fill-opacity=".35"/><circle cx="1538.9" cy="54.8" r="2" fill="#2f5fb0" fill-opacity=".35"/><circle cx="1469.5" cy="105.4" r="2" fill="#2f5fb0" fill-opacity=".35"/><circle cx="1549.5" cy="88.7" r="2" fill="#2f5fb0" fill-opacity=".35"/><circle cx="1574.3" cy="91.2" r="2" fill="#2f5fb0" fill-opacity=".35"/><circle cx="1564.2" cy="101.3" r="2" fill="#2f5fb0" fill-opacity=".35"/><circle cx="1581.9" cy="116.5" r="2" fill="#2f5fb0" fill-opacity=".35"/><circle cx="1590.0" cy="141.8" r="2" fill="#2f5fb0" fill-opacity=".35"/><circle cx="1556.6" cy="156.0" r="2" fill="#2f5fb0" fill-opacity=".35"/><circle cx="1553.1" cy="171.2" r="2" fill="#2f5fb0" fill-opacity=".35"/><circle cx="1352.1" cy="116.5" r="2" fill="#2f5fb0" fill-opacity=".35"/><circle cx="1398.6" cy="125.6" r="2" fill="#2f5fb0" fill-opacity=".35"/><circle cx="1458.4" cy="125.6" r="2" fill="#2f5fb0" fill-opacity=".35"/><circle cx="1489.8" cy="129.7" r="2" fill="#2f5fb0" fill-opacity=".35"/><circle cx="1441.7" cy="154.0" r="2" fill="#2f5fb0" fill-opacity=".35"/><circle cx="1332.8" cy="124.1" r="2" fill="#2f5fb0" fill-opacity=".35"/><circle cx="1271.1" cy="133.2" r="2" fill="#2f5fb0" fill-opacity=".35"/><circle cx="1693.3" cy="160.1" r="2" fill="#2f5fb0" fill-opacity=".35"/><circle cx="1722.7" cy="156.0" r="2" fill="#2f5fb0" fill-opacity=".35"/><circle cx="1706.5" cy="173.7" r="2" fill="#2f5fb0" fill-opacity=".35"/><circle cx="1679.7" cy="215.3" r="2" fill="#2f5fb0" fill-opacity=".35"/><circle cx="1689.8" cy="225.9" r="2" fill="#2f5fb0" fill-opacity=".35"/><circle cx="1714.6" cy="222.9" r="2" fill="#2f5fb0" fill-opacity=".35"/><circle cx="1718.6" cy="207.7" r="2" fill="#2f5fb0" fill-opacity=".35"/><circle cx="1639.7" cy="194.5" r="2" fill="#2f5fb0" fill-opacity=".35"/><circle cx="1576.9" cy="202.6" r="2" fill="#2f5fb0" fill-opacity=".35"/><circle cx="1519.2" cy="208.7" r="2" fill="#2f5fb0" fill-opacity=".35"/><circle cx="1428.0" cy="195.0" r="2" fill="#2f5fb0" fill-opacity=".35"/><circle cx="1311.1" cy="186.4" r="2" fill="#2f5fb0" fill-opacity=".35"/><circle cx="1285.2" cy="208.7" r="2" fill="#2f5fb0" fill-opacity=".35"/><circle cx="1276.1" cy="239.6" r="2" fill="#2f5fb0" fill-opacity=".35"/><circle cx="1291.3" cy="297.8" r="2" fill="#2f5fb0" fill-opacity=".35"/><circle cx="1452.8" cy="255.8" r="2" fill="#2f5fb0" fill-opacity=".35"/><circle cx="1441.7" cy="287.7" r="2" fill="#2f5fb0" fill-opacity=".35"/><circle cx="1515.1" cy="298.8" r="2" fill="#2f5fb0" fill-opacity=".35"/><circle cx="1586.0" cy="271.5" r="2" fill="#2f5fb0" fill-opacity=".35"/><circle cx="1594.1" cy="263.9" r="2" fill="#2f5fb0" fill-opacity=".35"/><circle cx="1634.6" cy="306.4" r="2" fill="#2f5fb0" fill-opacity=".35"/><circle cx="1709.0" cy="296.3" r="2" fill="#2f5fb0" fill-opacity=".35"/><circle cx="1669.5" cy="282.6" r="2" fill="#2f5fb0" fill-opacity=".35"/><circle cx="1406.2" cy="295.3" r="2" fill="#2f5fb0" fill-opacity=".35"/><circle cx="1410.3" cy="316.5" r="2" fill="#2f5fb0" fill-opacity=".35"/><circle cx="1431.6" cy="328.2" r="2" fill="#2f5fb0" fill-opacity=".35"/><circle cx="1429.0" cy="339.8" r="2" fill="#2f5fb0" fill-opacity=".35"/><circle cx="1505.0" cy="343.4" r="2" fill="#2f5fb0" fill-opacity=".35"/><circle cx="1525.2" cy="341.8" r="2" fill="#2f5fb0" fill-opacity=".35"/><circle cx="1565.7" cy="344.4" r="2" fill="#2f5fb0" fill-opacity=".35"/><circle cx="1547.0" cy="334.3" r="2" fill="#2f5fb0" fill-opacity=".35"/><circle cx="1494.8" cy="353.5" r="2" fill="#2f5fb0" fill-opacity=".35"/><circle cx="1497.4" cy="381.3" r="2" fill="#2f5fb0" fill-opacity=".35"/><circle cx="1284.2" cy="352.0" r="2" fill="#2f5fb0" fill-opacity=".35"/><circle cx="1386.0" cy="387.9" r="2" fill="#2f5fb0" fill-opacity=".35"/><circle cx="1334.3" cy="431.0" r="2" fill="#2f5fb0" fill-opacity=".35"/><circle cx="1342.9" cy="448.7" r="2" fill="#2f5fb0" fill-opacity=".35"/><circle cx="1502.4" cy="412.7" r="2" fill="#2f5fb0" fill-opacity=".35"/><circle cx="1535.4" cy="442.6" r="2" fill="#2f5fb0" fill-opacity=".35"/><circle cx="1579.4" cy="494.3" r="2" fill="#2f5fb0" fill-opacity=".35"/><circle cx="1658.4" cy="435.5" r="2" fill="#2f5fb0" fill-opacity=".35"/><circle cx="1637.6" cy="426.9" r="2" fill="#2f5fb0" fill-opacity=".35"/><circle cx="1779.9" cy="424.4" r="2" fill="#2f5fb0" fill-opacity=".35"/><circle cx="1834.1" cy="428.4" r="2" fill="#2f5fb0" fill-opacity=".35"/><circle cx="1791.6" cy="493.7" r="2" fill="#2f5fb0" fill-opacity=".35"/><circle cx="1852.8" cy="523.1" r="2" fill="#2f5fb0" fill-opacity=".35"/><circle cx="1844.2" cy="299.3" r="2" fill="#2f5fb0" fill-opacity=".35"/><circle cx="1967.8" cy="322.1" r="2" fill="#2f5fb0" fill-opacity=".35"/><circle cx="1854.3" cy="285.1" r="2" fill="#2f5fb0" fill-opacity=".35"/><circle cx="1902.9" cy="187.4" r="2" fill="#2f5fb0" fill-opacity=".35"/><circle cx="1693.8" cy="395.5" r="2" fill="#2f5fb0" fill-opacity=".35"/><circle cx="1946.5" cy="402.1" r="2" fill="#2f5fb0" fill-opacity=".35"/><circle cx="2041.7" cy="419.3" r="2" fill="#2f5fb0" fill-opacity=".35"/><circle cx="2112.6" cy="422.4" r="2" fill="#2f5fb0" fill-opacity=".35"/><circle cx="1388.5" cy="216.8" r="2" fill="#2f5fb0" fill-opacity=".35"/><circle cx="1389.5" cy="234.5" r="2" fill="#2f5fb0" fill-opacity=".35"/><circle cx="866.3" cy="92.8" r="2" fill="#2f5fb0" fill-opacity=".35"/><circle cx="934.7" cy="90.6" r="2" fill="#2f5fb0" fill-opacity=".35"/><circle cx="958.0" cy="72.0" r="2" fill="#2f5fb0" fill-opacity=".35"/><circle cx="941.3" cy="119.0" r="2" fill="#2f5fb0" fill-opacity=".35"/><circle cx="924.2" cy="136.8" r="2" fill="#2f5fb0" fill-opacity=".35"/><circle cx="1001.7" cy="147.0" r="2" fill="#2f5fb0" fill-opacity=".35"/><circle cx="995.5" cy="155.7" r="2" fill="#2f5fb0" fill-opacity=".35"/><circle cx="1028.9" cy="163.0" r="2" fill="#2f5fb0" fill-opacity=".35"/><circle cx="1039.5" cy="166.6" r="2" fill="#2f5fb0" fill-opacity=".35"/><circle cx="1075.9" cy="176.1" r="2" fill="#2f5fb0" fill-opacity=".35"/><circle cx="1048.2" cy="75.7" r="2" fill="#2f5fb0" fill-opacity=".35"/><circle cx="1087.2" cy="88.4" r="2" fill="#2f5fb0" fill-opacity=".35"/><circle cx="1118.1" cy="89.5" r="2" fill="#2f5fb0" fill-opacity=".35"/><circle cx="1183.6" cy="104.4" r="2" fill="#2f5fb0" fill-opacity=".35"/><circle cx="1162.5" cy="62.9" r="2" fill="#2f5fb0" fill-opacity=".35"/><circle cx="1251.9" cy="71.7" r="2" fill="#2f5fb0" fill-opacity=".35"/><circle cx="1258.9" cy="79.3" r="2" fill="#2f5fb0" fill-opacity=".35"/><circle cx="1222.1" cy="95.7" r="2" fill="#2f5fb0" fill-opacity=".35"/><circle cx="1192.6" cy="142.2" r="2" fill="#2f5fb0" fill-opacity=".35"/><circle cx="1196.3" cy="164.1" r="2" fill="#2f5fb0" fill-opacity=".35"/><circle cx="1179.9" cy="197.9" r="2" fill="#2f5fb0" fill-opacity=".35"/><circle cx="1190.8" cy="187.7" r="2" fill="#2f5fb0" fill-opacity=".35"/><circle cx="1166.1" cy="184.1" r="2" fill="#2f5fb0" fill-opacity=".35"/><circle cx="1152.6" cy="203.3" r="2" fill="#2f5fb0" fill-opacity=".35"/><circle cx="1205.4" cy="167.0" r="2" fill="#2f5fb0" fill-opacity=".35"/><circle cx="1234.5" cy="238.6" r="2" fill="#2f5fb0" fill-opacity=".35"/><circle cx="1204.3" cy="224.1" r="2" fill="#2f5fb0" fill-opacity=".35"/><circle cx="1249.0" cy="308.8" r="2" fill="#2f5fb0" fill-opacity=".35"/><circle cx="1238.8" cy="356.1" r="2" fill="#2f5fb0" fill-opacity=".35"/><circle cx="1265.0" cy="343.0" r="2" fill="#2f5fb0" fill-opacity=".35"/><circle cx="1225.4" cy="406.7" r="2" fill="#2f5fb0" fill-opacity=".35"/><circle cx="1162.8" cy="404.1" r="2" fill="#2f5fb0" fill-opacity=".35"/><circle cx="1131.9" cy="381.2" r="2" fill="#2f5fb0" fill-opacity=".35"/><circle cx="1116.3" cy="487.8" r="2" fill="#2f5fb0" fill-opacity=".35"/><circle cx="1098.1" cy="535.1" r="2" fill="#2f5fb0" fill-opacity=".35"/><circle cx="1015.5" cy="542.4" r="2" fill="#2f5fb0" fill-opacity=".35"/><circle cx="787.8" cy="535.1" r="2" fill="#2f5fb0" fill-opacity=".35"/><circle cx="838.0" cy="546.0" r="2" fill="#2f5fb0" fill-opacity=".35"/><circle cx="936.9" cy="458.7" r="2" fill="#2f5fb0" fill-opacity=".35"/><circle cx="953.6" cy="464.2" r="2" fill="#2f5fb0" fill-opacity=".35"/><circle cx="935.5" cy="387.8" r="2" fill="#2f5fb0" fill-opacity=".35"/><circle cx="896.2" cy="388.9" r="2" fill="#2f5fb0" fill-opacity=".35"/><circle cx="859.8" cy="333.2" r="2" fill="#2f5fb0" fill-opacity=".35"/><circle cx="870.0" cy="338.7" r="2" fill="#2f5fb0" fill-opacity=".35"/><circle cx="1008.9" cy="345.9" r="2" fill="#2f5fb0" fill-opacity=".35"/><circle cx="1084.6" cy="324.8" r="2" fill="#2f5fb0" fill-opacity=".35"/><circle cx="986.4" cy="261.5" r="2" fill="#2f5fb0" fill-opacity=".35"/><circle cx="997.3" cy="255.7" r="2" fill="#2f5fb0" fill-opacity=".35"/><circle cx="1041.7" cy="291.4" r="2" fill="#2f5fb0" fill-opacity=".35"/><circle cx="1070.1" cy="257.9" r="2" fill="#2f5fb0" fill-opacity=".35"/><circle cx="821.6" cy="287.0" r="2" fill="#2f5fb0" fill-opacity=".35"/><circle cx="767.4" cy="239.7" r="2" fill="#2f5fb0" fill-opacity=".35"/><circle cx="739.8" cy="236.8" r="2" fill="#2f5fb0" fill-opacity=".35"/><circle cx="846.0" cy="244.1" r="2" fill="#2f5fb0" fill-opacity=".35"/><circle cx="883.1" cy="247.0" r="2" fill="#2f5fb0" fill-opacity=".35"/><circle cx="707.7" cy="158.2" r="2" fill="#2f5fb0" fill-opacity=".35"/><circle cx="723.7" cy="159.7" r="2" fill="#2f5fb0" fill-opacity=".35"/><circle cx="669.9" cy="335.8" r="2" fill="#2f5fb0" fill-opacity=".35"/><circle cx="745.2" cy="386.7" r="2" fill="#2f5fb0" fill-opacity=".35"/><circle cx="818.6" cy="253.5" r="2" fill="#2f5fb0" fill-opacity=".35"/><circle cx="940.4" cy="105.2" r="2" fill="#2f5fb0" fill-opacity=".35"/><circle cx="1051.6" cy="280.0" r="2" fill="#2f5fb0" fill-opacity=".35"/><circle cx="635.8" cy="330.3" r="2" fill="#2f5fb0" fill-opacity=".35"/><circle cx="561.7" cy="347.8" r="2" fill="#2f5fb0" fill-opacity=".35"/><circle cx="553.7" cy="388.6" r="2" fill="#2f5fb0" fill-opacity=".35"/><circle cx="400.1" cy="351.5" r="2" fill="#2f5fb0" fill-opacity=".35"/><circle cx="515.1" cy="373.2" r="2" fill="#2f5fb0" fill-opacity=".35"/><circle cx="479.6" cy="150.2" r="2" fill="#2f5fb0" fill-opacity=".35"/></svg></div>
<div class="a" style="left:620px;top:276px;width:403px;height:45px;box-sizing:border-box;border:1.5px solid rgba(255,255,255,.22);background:rgba(255,255,255,.1);border-radius:23px"></div>
<div class="a" style="left:643px;top:291px;width:14px;height:14px;border-radius:50%;background:#4fd08c"></div>
<div class="a" style="left:620px;top:574px;width:441px;height:86px;background:#fff;border-radius:28px"></div>
<div class="a" style="left:1082px;top:574px;width:352px;height:86px;background:#fff;border-radius:28px"></div>
<svg class="i" style="left:991px;top:601px;" width="32" height="32" viewBox="0 0 24 24" stroke="#2d4fe0" stroke-width="1.6"><path d="m8.25 4.5 7.5 7.5-7.5 7.5"/></svg>
<svg class="i" style="left:1363.5px;top:601px;" width="32" height="32" viewBox="0 0 24 24" stroke="#2d4fe0" stroke-width="1.6"><path d="m8.25 4.5 7.5 7.5-7.5 7.5"/></svg>
<div class="card" style="left:533.6px;top:927.4px;width:371.4px;height:233px"></div>
<svg class="i" style="left:825.3px;top:971.8px;" width="36" height="36" viewBox="0 0 24 24" stroke="#0f172a" stroke-width="1.5"><path d="m11.25 11.25.041-.02a.75.75 0 0 1 1.063.852l-.708 2.836a.75.75 0 0 0 1.063.853l.041-.021M21 12a9 9 0 1 1-18 0 9 9 0 0 1 18 0Zm-9-3.75h.008v.008H12V8.25Z"/></svg>
<div class="card" style="left:942.7px;top:927.4px;width:371.4px;height:233px"></div>
<svg class="i" style="left:1234.4px;top:971.8px;" width="36" height="36" viewBox="0 0 24 24" stroke="#0f172a" stroke-width="1.5"><path d="m11.25 11.25.041-.02a.75.75 0 0 1 1.063.852l-.708 2.836a.75.75 0 0 0 1.063.853l.041-.021M21 12a9 9 0 1 1-18 0 9 9 0 0 1 18 0Zm-9-3.75h.008v.008H12V8.25Z"/></svg>
<div class="card" style="left:1351.8px;top:927.4px;width:371.4px;height:233px"></div>
<svg class="i" style="left:1648.6px;top:971.8px;" width="36" height="36" viewBox="0 0 24 24" stroke="#0f172a" stroke-width="1.5"><path d="m11.25 11.25.041-.02a.75.75 0 0 1 1.063.852l-.708 2.836a.75.75 0 0 0 1.063.853l.041-.021M21 12a9 9 0 1 1-18 0 9 9 0 0 1 18 0Zm-9-3.75h.008v.008H12V8.25Z"/></svg>
<div class="card" style="left:1760.9px;top:927.4px;width:371.4px;height:233px"></div>
<svg class="i" style="left:2052.7px;top:971.8px;" width="36" height="36" viewBox="0 0 24 24" stroke="#0f172a" stroke-width="1.5"><path d="m11.25 11.25.041-.02a.75.75 0 0 1 1.063.852l-.708 2.836a.75.75 0 0 0 1.063.853l.041-.021M21 12a9 9 0 1 1-18 0 9 9 0 0 1 18 0Zm-9-3.75h.008v.008H12V8.25Z"/></svg>
<div class="card" style="left:2170.0px;top:927.4px;width:371.4px;height:233px"></div>
<svg class="i" style="left:2461.9px;top:971.8px;" width="36" height="36" viewBox="0 0 24 24" stroke="#0f172a" stroke-width="1.5"><path d="m11.25 11.25.041-.02a.75.75 0 0 1 1.063.852l-.708 2.836a.75.75 0 0 0 1.063.853l.041-.021M21 12a9 9 0 1 1-18 0 9 9 0 0 1 18 0Zm-9-3.75h.008v.008H12V8.25Z"/></svg>
<div class="card" style="left:2579.1px;top:927.4px;width:371.4px;height:233px"></div>
<svg class="i" style="left:2871.0px;top:971.8px;" width="36" height="36" viewBox="0 0 24 24" stroke="#0f172a" stroke-width="1.5"><path d="m11.25 11.25.041-.02a.75.75 0 0 1 1.063.852l-.708 2.836a.75.75 0 0 0 1.063.853l.041-.021M21 12a9 9 0 1 1-18 0 9 9 0 0 1 18 0Zm-9-3.75h.008v.008H12V8.25Z"/></svg>
<div class="card" style="left:533.6px;top:1197.4px;width:371.4px;height:233px"></div>
<svg class="i" style="left:827.8px;top:1241.8px;" width="36" height="36" viewBox="0 0 24 24" stroke="#0f172a" stroke-width="1.5"><path d="m11.25 11.25.041-.02a.75.75 0 0 1 1.063.852l-.708 2.836a.75.75 0 0 0 1.063.853l.041-.021M21 12a9 9 0 1 1-18 0 9 9 0 0 1 18 0Zm-9-3.75h.008v.008H12V8.25Z"/></svg>
<div class="card" style="left:942.7px;top:1197.4px;width:371.4px;height:233px"></div>
<svg class="i" style="left:1240.7px;top:1241.8px;" width="36" height="36" viewBox="0 0 24 24" stroke="#0f172a" stroke-width="1.5"><path d="m11.25 11.25.041-.02a.75.75 0 0 1 1.063.852l-.708 2.836a.75.75 0 0 0 1.063.853l.041-.021M21 12a9 9 0 1 1-18 0 9 9 0 0 1 18 0Zm-9-3.75h.008v.008H12V8.25Z"/></svg>
<div class="card" style="left:1351.8px;top:1197.4px;width:371.4px;height:233px"></div>
<svg class="i" style="left:1642.3px;top:1241.8px;" width="36" height="36" viewBox="0 0 24 24" stroke="#0f172a" stroke-width="1.5"><path d="m11.25 11.25.041-.02a.75.75 0 0 1 1.063.852l-.708 2.836a.75.75 0 0 0 1.063.853l.041-.021M21 12a9 9 0 1 1-18 0 9 9 0 0 1 18 0Zm-9-3.75h.008v.008H12V8.25Z"/></svg>
<div class="card" style="left:1760.9px;top:1197.4px;width:371.4px;height:233px"></div>
<svg class="i" style="left:2052.7px;top:1241.8px;" width="36" height="36" viewBox="0 0 24 24" stroke="#0f172a" stroke-width="1.5"><path d="m11.25 11.25.041-.02a.75.75 0 0 1 1.063.852l-.708 2.836a.75.75 0 0 0 1.063.853l.041-.021M21 12a9 9 0 1 1-18 0 9 9 0 0 1 18 0Zm-9-3.75h.008v.008H12V8.25Z"/></svg>
<div class="card" style="left:2170.0px;top:1197.4px;width:371.4px;height:233px"></div>
<svg class="i" style="left:2461.9px;top:1241.8px;" width="36" height="36" viewBox="0 0 24 24" stroke="#0f172a" stroke-width="1.5"><path d="m11.25 11.25.041-.02a.75.75 0 0 1 1.063.852l-.708 2.836a.75.75 0 0 0 1.063.853l.041-.021M21 12a9 9 0 1 1-18 0 9 9 0 0 1 18 0Zm-9-3.75h.008v.008H12V8.25Z"/></svg>
<div class="card" style="left:2579.1px;top:1197.4px;width:371.4px;height:233px"></div>
<svg class="i" style="left:2873.5px;top:1241.8px;" width="36" height="36" viewBox="0 0 24 24" stroke="#0f172a" stroke-width="1.5"><path d="m11.25 11.25.041-.02a.75.75 0 0 1 1.063.852l-.708 2.836a.75.75 0 0 0 1.063.853l.041-.021M21 12a9 9 0 1 1-18 0 9 9 0 0 1 18 0Zm-9-3.75h.008v.008H12V8.25Z"/></svg>
<div class="card" style="left:533.6px;top:1467.4px;width:371.4px;height:233px"></div>
<svg class="i" style="left:826.6px;top:1511.8px;" width="36" height="36" viewBox="0 0 24 24" stroke="#0f172a" stroke-width="1.5"><path d="m11.25 11.25.041-.02a.75.75 0 0 1 1.063.852l-.708 2.836a.75.75 0 0 0 1.063.853l.041-.021M21 12a9 9 0 1 1-18 0 9 9 0 0 1 18 0Zm-9-3.75h.008v.008H12V8.25Z"/></svg>
<div class="card" style="left:942.7px;top:1467.4px;width:371.4px;height:233px"></div>
<svg class="i" style="left:1234.4px;top:1511.8px;" width="36" height="36" viewBox="0 0 24 24" stroke="#0f172a" stroke-width="1.5"><path d="m11.25 11.25.041-.02a.75.75 0 0 1 1.063.852l-.708 2.836a.75.75 0 0 0 1.063.853l.041-.021M21 12a9 9 0 1 1-18 0 9 9 0 0 1 18 0Zm-9-3.75h.008v.008H12V8.25Z"/></svg>
<div class="card" style="left:1351.8px;top:1467.4px;width:371.4px;height:233px"></div>
<svg class="i" style="left:1647.3px;top:1511.8px;" width="36" height="36" viewBox="0 0 24 24" stroke="#0f172a" stroke-width="1.5"><path d="m11.25 11.25.041-.02a.75.75 0 0 1 1.063.852l-.708 2.836a.75.75 0 0 0 1.063.853l.041-.021M21 12a9 9 0 1 1-18 0 9 9 0 0 1 18 0Zm-9-3.75h.008v.008H12V8.25Z"/></svg>
<div class="card" style="left:1760.9px;top:1467.4px;width:371.4px;height:233px"></div>
<svg class="i" style="left:2056.4px;top:1511.8px;" width="36" height="36" viewBox="0 0 24 24" stroke="#0f172a" stroke-width="1.5"><path d="m11.25 11.25.041-.02a.75.75 0 0 1 1.063.852l-.708 2.836a.75.75 0 0 0 1.063.853l.041-.021M21 12a9 9 0 1 1-18 0 9 9 0 0 1 18 0Zm-9-3.75h.008v.008H12V8.25Z"/></svg>
<div class="card" style="left:2170.0px;top:1467.4px;width:371.4px;height:233px"></div>
<svg class="i" style="left:2461.9px;top:1511.8px;" width="36" height="36" viewBox="0 0 24 24" stroke="#0f172a" stroke-width="1.5"><path d="m11.25 11.25.041-.02a.75.75 0 0 1 1.063.852l-.708 2.836a.75.75 0 0 0 1.063.853l.041-.021M21 12a9 9 0 1 1-18 0 9 9 0 0 1 18 0Zm-9-3.75h.008v.008H12V8.25Z"/></svg>
<div class="card" style="left:2579.1px;top:1467.4px;width:371.4px;height:233px"></div>
<svg class="i" style="left:2871.0px;top:1511.8px;" width="36" height="36" viewBox="0 0 24 24" stroke="#0f172a" stroke-width="1.5"><path d="m11.25 11.25.041-.02a.75.75 0 0 1 1.063.852l-.708 2.836a.75.75 0 0 0 1.063.853l.041-.021M21 12a9 9 0 1 1-18 0 9 9 0 0 1 18 0Zm-9-3.75h.008v.008H12V8.25Z"/></svg>
<div class="card" style="left:533.6px;top:1737.4px;width:371.4px;height:233px"></div>
<svg class="i" style="left:825.3px;top:1781.8px;" width="36" height="36" viewBox="0 0 24 24" stroke="#0f172a" stroke-width="1.5"><path d="m11.25 11.25.041-.02a.75.75 0 0 1 1.063.852l-.708 2.836a.75.75 0 0 0 1.063.853l.041-.021M21 12a9 9 0 1 1-18 0 9 9 0 0 1 18 0Zm-9-3.75h.008v.008H12V8.25Z"/></svg>
<div class="card" style="left:942.7px;top:1737.4px;width:371.4px;height:233px"></div>
<svg class="i" style="left:1240.7px;top:1781.8px;" width="36" height="36" viewBox="0 0 24 24" stroke="#0f172a" stroke-width="1.5"><path d="m11.25 11.25.041-.02a.75.75 0 0 1 1.063.852l-.708 2.836a.75.75 0 0 0 1.063.853l.041-.021M21 12a9 9 0 1 1-18 0 9 9 0 0 1 18 0Zm-9-3.75h.008v.008H12V8.25Z"/></svg>
<div class="card" style="left:1351.8px;top:1737.4px;width:371.4px;height:233px"></div>
<svg class="i" style="left:1644.8px;top:1781.8px;" width="36" height="36" viewBox="0 0 24 24" stroke="#0f172a" stroke-width="1.5"><path d="m11.25 11.25.041-.02a.75.75 0 0 1 1.063.852l-.708 2.836a.75.75 0 0 0 1.063.853l.041-.021M21 12a9 9 0 1 1-18 0 9 9 0 0 1 18 0Zm-9-3.75h.008v.008H12V8.25Z"/></svg>
<div class="card" style="left:1760.9px;top:1737.4px;width:371.4px;height:233px"></div>
<svg class="i" style="left:2057.7px;top:1781.8px;" width="36" height="36" viewBox="0 0 24 24" stroke="#0f172a" stroke-width="1.5"><path d="m11.25 11.25.041-.02a.75.75 0 0 1 1.063.852l-.708 2.836a.75.75 0 0 0 1.063.853l.041-.021M21 12a9 9 0 1 1-18 0 9 9 0 0 1 18 0Zm-9-3.75h.008v.008H12V8.25Z"/></svg>
<div class="card" style="left:2170.0px;top:1737.4px;width:371.4px;height:233px"></div>
<svg class="i" style="left:2469.4px;top:1781.8px;" width="36" height="36" viewBox="0 0 24 24" stroke="#0f172a" stroke-width="1.5"><path d="m11.25 11.25.041-.02a.75.75 0 0 1 1.063.852l-.708 2.836a.75.75 0 0 0 1.063.853l.041-.021M21 12a9 9 0 1 1-18 0 9 9 0 0 1 18 0Zm-9-3.75h.008v.008H12V8.25Z"/></svg>
<div class="card" style="left:2579.1px;top:1737.4px;width:371.4px;height:233px"></div>
<svg class="i" style="left:2876.0px;top:1781.8px;" width="36" height="36" viewBox="0 0 24 24" stroke="#0f172a" stroke-width="1.5"><path d="m11.25 11.25.041-.02a.75.75 0 0 1 1.063.852l-.708 2.836a.75.75 0 0 0 1.063.853l.041-.021M21 12a9 9 0 1 1-18 0 9 9 0 0 1 18 0Zm-9-3.75h.008v.008H12V8.25Z"/></svg>
<div class="tx" id="logo_title" style="left:129.8px;top:39.8px;font-size:33.14px;line-height:33.14px;font-weight:700;color:#111827;letter-spacing:-0.98px;">ByteVox Hire</div>
<div class="tx" id="logo_sub" style="left:129.6px;top:79.8px;font-size:25.58px;line-height:25.58px;font-weight:400;color:#6b7280;letter-spacing:0.35px;">Hiring Platform</div>
<div class="tx" id="nav_overview" style="left:98.4px;top:200.4px;font-size:26.00px;line-height:26.00px;font-weight:400;color:#1d4ed8;letter-spacing:0.14px;-webkit-text-stroke:0.45px currentColor">Overview</div>
<div class="tx" id="nav_req" style="left:96.4px;top:279.8px;font-size:26.00px;line-height:26.00px;font-weight:400;color:#334155;letter-spacing:0.35px;-webkit-text-stroke:0.45px currentColor">Requisitions</div>
<div class="tx" id="nav_jd" style="left:98.4px;top:359.0px;font-size:26.00px;line-height:26.00px;font-weight:400;color:#334155;letter-spacing:0.04px;-webkit-text-stroke:0.45px currentColor">JD Improver</div>
<div class="tx" id="nav_upload" style="left:97.4px;top:437.6px;font-size:26.00px;line-height:26.00px;font-weight:400;color:#334155;letter-spacing:-0.05px;-webkit-text-stroke:0.45px currentColor">Upload Resumes</div>
<div class="tx" id="sub_hub" style="left:100.2px;top:514.4px;font-size:26.00px;line-height:26.00px;font-weight:400;color:#475569;letter-spacing:0.09px;-webkit-text-stroke:0.2px currentColor">Upload Hub</div>
<div class="tx" id="sub_hist" style="left:100.2px;top:586.0px;font-size:26.00px;line-height:26.00px;font-weight:400;color:#475569;letter-spacing:0.14px;-webkit-text-stroke:0.2px currentColor">Upload History</div>
<div class="tx" id="nav_cand" style="left:97.4px;top:661.1px;font-size:26.00px;line-height:26.00px;font-weight:400;color:#334155;letter-spacing:0.29px;-webkit-text-stroke:0.45px currentColor">Candidates</div>
<div class="tx" id="nav_int" style="left:97.4px;top:740.5px;font-size:26.00px;line-height:26.00px;font-weight:400;color:#334155;letter-spacing:0.40px;-webkit-text-stroke:0.45px currentColor">Interviews</div>
<div class="tx" id="sub_start" style="left:151.3px;top:816.5px;font-size:26.00px;line-height:26.00px;font-weight:400;color:#475569;letter-spacing:0.08px;-webkit-text-stroke:0.2px currentColor">Start New Interview</div>
<div class="tx" id="sub_past" style="left:150.3px;top:888.0px;font-size:26.00px;line-height:26.00px;font-weight:400;color:#475569;letter-spacing:-0.03px;-webkit-text-stroke:0.2px currentColor">Past Interviews</div>
<div class="tx" id="nav_subs" style="left:97.4px;top:964.2px;font-size:26.00px;line-height:26.00px;font-weight:400;color:#334155;letter-spacing:0.69px;-webkit-text-stroke:0.45px currentColor">Subscription</div>
<div class="tx" id="nav_set" style="left:97.4px;top:1043.0px;font-size:26.00px;line-height:26.00px;font-weight:400;color:#334155;letter-spacing:0.51px;-webkit-text-stroke:0.45px currentColor">Settings</div>
<div class="tx" id="nav_prof" style="left:96.3px;top:1122.0px;font-size:26.00px;line-height:26.00px;font-weight:400;color:#334155;letter-spacing:0.62px;-webkit-text-stroke:0.45px currentColor">Profile</div>
<div class="tx" id="nav_sales" style="left:97.3px;top:1201.3px;font-size:26.00px;line-height:26.00px;font-weight:400;color:#334155;letter-spacing:0.12px;-webkit-text-stroke:0.45px currentColor">Sales Interview</div>
<div class="tx" id="nav_mock" style="left:96.3px;top:1281.0px;font-size:26.00px;line-height:26.00px;font-weight:400;color:#334155;letter-spacing:0.52px;-webkit-text-stroke:0.45px currentColor">Mock Interview</div>
<div class="tx" id="btn_add" style="left:124.8px;top:1396.9px;font-size:25.29px;line-height:25.29px;font-weight:400;color:#ffffff;letter-spacing:0.73px;-webkit-text-stroke:1px currentColor">Add New Requisition</div>
<div class="tx" id="avatar_a" style="left:50.0px;top:1821.0px;font-size:26.16px;line-height:26.16px;font-weight:400;color:#ffffff;letter-spacing:0.00px;-webkit-text-stroke:0.5px currentColor;transform:scaleX(.85);transform-origin:0 0">A</div>
<div class="tx" id="admin" style="left:109.0px;top:1821.0px;font-size:26.45px;line-height:26.45px;font-weight:400;color:#111827;letter-spacing:-0.15px;-webkit-text-stroke:0.3px currentColor">Admin</div>
<div class="tx" id="hdr_badge" style="left:577.0px;top:83.9px;font-size:21.80px;line-height:21.80px;font-weight:400;color:#1d4ed8;letter-spacing:0.55px;-webkit-text-stroke:0.5px currentColor">ByteVox Hire</div>
<div class="tx" id="hdr_overview" style="left:738.7px;top:82.3px;font-size:24.13px;line-height:24.13px;font-weight:400;color:#111827;letter-spacing:0.84px;">Overview</div>
<div class="tx" id="hdr_updated" style="left:861.5px;top:83.8px;font-size:22.24px;line-height:22.24px;font-weight:400;color:#1f2937;letter-spacing:0.36px;-webkit-text-stroke:0.35px currentColor">Updated at <b style="font-weight:700">·</b> 16:15:03 (4:15:03 PM) <b style="font-weight:700">·</b> GMT+05:30</div>
<div class="tx" id="sel_text" style="left:2126.8px;top:80.8px;font-size:26.16px;line-height:26.16px;font-weight:400;color:#111827;letter-spacing:-0.18px;-webkit-text-stroke:0.5px currentColor">30 days</div>
<div class="tx" id="selected" style="left:2294.0px;top:83.1px;font-size:22.67px;line-height:22.67px;font-weight:400;color:#1f2937;letter-spacing:0.25px;-webkit-text-stroke:0.5px currentColor">Selected: 30d</div>
<div class="tx" id="refresh" style="left:2515.9px;top:81.1px;font-size:26.16px;line-height:26.16px;font-weight:400;color:#111827;letter-spacing:0.08px;-webkit-text-stroke:0.5px currentColor">Refresh</div>
<div class="tx" id="addreq" style="left:2712.5px;top:80.1px;font-size:27.18px;line-height:27.18px;font-weight:400;color:#ffffff;letter-spacing:-0.19px;-webkit-text-stroke:1px currentColor">Add Requisition</div>
<div class="tx" id="live" style="left:671.5px;top:287.5px;font-size:21.08px;line-height:21.08px;font-weight:400;color:#f1f5f9;letter-spacing:0.91px;-webkit-text-stroke:0.2px currentColor">Live: AI-assisted hiring workflow</div>
<div class="tx" id="title_a" style="left:625.0px;top:344.8px;font-size:86.63px;line-height:86.63px;font-weight:700;color:#ffffff;letter-spacing:-4.28px;">Welcome to</div>
<div class="tx" id="title_b" style="left:1081.0px;top:344.8px;font-size:86.63px;line-height:86.63px;font-weight:700;color:#bfdbfe;letter-spacing:-4.39px;">ByteVox Hire</div>
<div class="tx" id="hero_sub" style="left:621.8px;top:470.3px;font-size:35.76px;line-height:35.76px;font-weight:400;color:#d1d5db;letter-spacing:-0.15px;">All your hiring ops — connected, intelligent, and analytics-powered.</div>
<div class="tx" id="btn1" style="left:656.6px;top:601.9px;font-size:29.94px;line-height:29.94px;font-weight:400;color:#111827;letter-spacing:0.41px;-webkit-text-stroke:1px currentColor">Start Interview Process</div>
<div class="tx" id="btn2" style="left:1121.2px;top:601.9px;font-size:29.94px;line-height:29.94px;font-weight:400;color:#111827;letter-spacing:0.09px;-webkit-text-stroke:1px currentColor">View Candidates</div>
<div class="tx" id="sec_title" style="left:534.5px;top:813.3px;font-size:44.48px;line-height:44.48px;font-weight:700;color:#111827;letter-spacing:-1.12px;">Top-level View</div>
<div class="tx" id="sec_sub" style="left:534.5px;top:868.8px;font-size:25.00px;line-height:25.00px;font-weight:400;color:#111827;letter-spacing:0.50px;">Velocity, volume &amp; progress (Last 30 days)</div>
<div class="tx" style="left:571.2px;top:970.4px;font-size:19.77px;line-height:19.77px;font-weight:400;color:#1e293b;-webkit-text-stroke:0.5px #1e293b;letter-spacing:0.80px">TOTAL REQUISITIONS</div>
<div class="tx" style="left:570.7px;top:1074.6px;font-size:45.64px;line-height:45.64px;font-weight:700;color:#111827;letter-spacing:-0.60px">9</div>
<div class="tx" style="left:980.3px;top:970.4px;font-size:19.77px;line-height:19.77px;font-weight:400;color:#1e293b;-webkit-text-stroke:0.5px #1e293b;letter-spacing:0.80px">OPEN REQUISITIONS</div>
<div class="tx" style="left:979.8px;top:1074.6px;font-size:45.64px;line-height:45.64px;font-weight:700;color:#111827;letter-spacing:-0.60px">3</div>
<div class="tx" style="left:1389.4px;top:970.4px;font-size:19.77px;line-height:19.77px;font-weight:400;color:#1e293b;-webkit-text-stroke:0.5px #1e293b;letter-spacing:0.80px">AVERAGE RELEVANCY</div>
<div class="tx" style="left:1389.4px;top:1000.3px;font-size:19.77px;line-height:19.77px;font-weight:400;color:#1e293b;-webkit-text-stroke:0.5px #1e293b;letter-spacing:0.80px">SCORE</div>
<div class="tx" style="left:1388.9px;top:1074.6px;font-size:45.64px;line-height:45.64px;font-weight:700;color:#111827;letter-spacing:0.50px">61.6%</div>
<div class="tx" style="left:1798.5px;top:970.4px;font-size:19.77px;line-height:19.77px;font-weight:400;color:#1e293b;-webkit-text-stroke:0.5px #1e293b;letter-spacing:0.80px">TOTAL CANDIDATES</div>
<div class="tx" style="left:1796.0px;top:1074.6px;font-size:45.64px;line-height:45.64px;font-weight:700;color:#111827;letter-spacing:3.50px">104</div>
<div class="tx" style="left:2207.6px;top:970.4px;font-size:19.77px;line-height:19.77px;font-weight:400;color:#1e293b;-webkit-text-stroke:0.5px #1e293b;letter-spacing:0.80px">ACTIVE CANDIDATES</div>
<div class="tx" style="left:2205.1px;top:1074.6px;font-size:45.64px;line-height:45.64px;font-weight:700;color:#111827;letter-spacing:3.50px">104</div>
<div class="tx" style="left:2616.7px;top:970.4px;font-size:19.77px;line-height:19.77px;font-weight:400;color:#1e293b;-webkit-text-stroke:0.5px #1e293b;letter-spacing:0.80px">TOTAL INTERVIEWS</div>
<div class="tx" style="left:2616.2px;top:1074.6px;font-size:45.64px;line-height:45.64px;font-weight:700;color:#111827;letter-spacing:-4.00px">51</div>
<div class="tx" style="left:571.2px;top:1240.4px;font-size:19.77px;line-height:19.77px;font-weight:400;color:#1e293b;-webkit-text-stroke:0.5px #1e293b;letter-spacing:0.80px">COMPLETED</div>
<div class="tx" style="left:571.2px;top:1270.3px;font-size:19.77px;line-height:19.77px;font-weight:400;color:#1e293b;-webkit-text-stroke:0.5px #1e293b;letter-spacing:0.80px">INTERVIEWS</div>
<div class="tx" style="left:568.7px;top:1344.6px;font-size:45.64px;line-height:45.64px;font-weight:700;color:#111827;letter-spacing:2.90px">18</div>
<div class="tx" style="left:980.3px;top:1240.4px;font-size:19.77px;line-height:19.77px;font-weight:400;color:#1e293b;-webkit-text-stroke:0.5px #1e293b;letter-spacing:0.80px">CANDAIDATE PER</div>
<div class="tx" style="left:980.3px;top:1270.3px;font-size:19.77px;line-height:19.77px;font-weight:400;color:#1e293b;-webkit-text-stroke:0.5px #1e293b;letter-spacing:0.80px">REQUISITIONS</div>
<div class="tx" style="left:977.8px;top:1344.6px;font-size:45.64px;line-height:45.64px;font-weight:700;color:#111827;letter-spacing:2.25px">11.56</div>
<div class="tx" style="left:1389.4px;top:1240.4px;font-size:19.77px;line-height:19.77px;font-weight:400;color:#1e293b;-webkit-text-stroke:0.5px #1e293b;letter-spacing:0.80px">INTERNAL MOBILITY</div>
<div class="tx" style="left:1386.9px;top:1344.6px;font-size:45.64px;line-height:45.64px;font-weight:700;color:#111827;letter-spacing:0.33px">1.0%</div>
<div class="tx" style="left:1798.5px;top:1240.4px;font-size:19.77px;line-height:19.77px;font-weight:400;color:#1e293b;-webkit-text-stroke:0.5px #1e293b;letter-spacing:0.80px">JD SCORE</div>
<div class="tx" style="left:1797.0px;top:1344.6px;font-size:45.64px;line-height:45.64px;font-weight:700;color:#111827;letter-spacing:1.67px">70.0</div>
<div class="tx" style="left:2207.6px;top:1240.4px;font-size:19.77px;line-height:19.77px;font-weight:400;color:#1e293b;-webkit-text-stroke:0.5px #1e293b;letter-spacing:0.80px">RELEVANCY SCORE</div>
<div class="tx" style="left:2207.1px;top:1344.6px;font-size:45.64px;line-height:45.64px;font-weight:700;color:#111827;letter-spacing:1.00px">61.6</div>
<div class="tx" style="left:2616.7px;top:1240.4px;font-size:19.77px;line-height:19.77px;font-weight:400;color:#1e293b;-webkit-text-stroke:0.5px #1e293b;letter-spacing:0.80px">AVERAGE TIME TO</div>
<div class="tx" style="left:2616.7px;top:1270.3px;font-size:19.77px;line-height:19.77px;font-weight:400;color:#1e293b;-webkit-text-stroke:0.5px #1e293b;letter-spacing:0.80px">SCORE</div>
<div class="tx" style="left:2616.2px;top:1344.6px;font-size:45.64px;line-height:45.64px;font-weight:700;color:#111827;letter-spacing:-0.25px">26.8s</div>
<div class="tx" style="left:571.2px;top:1510.4px;font-size:19.77px;line-height:19.77px;font-weight:400;color:#1e293b;-webkit-text-stroke:0.5px #1e293b;letter-spacing:0.80px">SCHEDULE</div>
<div class="tx" style="left:571.2px;top:1540.3px;font-size:19.77px;line-height:19.77px;font-weight:400;color:#1e293b;-webkit-text-stroke:0.5px #1e293b;letter-spacing:0.80px">COMPLETION</div>
<div class="tx" style="left:568.7px;top:1614.6px;font-size:45.64px;line-height:45.64px;font-weight:700;color:#111827;letter-spacing:0.80px">100.0%</div>
<div class="tx" style="left:980.3px;top:1510.4px;font-size:19.77px;line-height:19.77px;font-weight:400;color:#1e293b;-webkit-text-stroke:0.5px #1e293b;letter-spacing:0.80px">CONNECTION RATE</div>
<div class="tx" style="left:979.8px;top:1614.6px;font-size:45.64px;line-height:45.64px;font-weight:700;color:#111827;letter-spacing:-0.10px">85.7%</div>
<div class="tx" style="left:1389.4px;top:1510.4px;font-size:19.77px;line-height:19.77px;font-weight:400;color:#1e293b;-webkit-text-stroke:0.5px #1e293b;letter-spacing:0.80px">AVERAGE CALL</div>
<div class="tx" style="left:1389.4px;top:1540.3px;font-size:19.77px;line-height:19.77px;font-weight:400;color:#1e293b;-webkit-text-stroke:0.5px #1e293b;letter-spacing:0.80px">DURATION</div>
<div class="tx" style="left:1386.9px;top:1614.6px;font-size:45.64px;line-height:45.64px;font-weight:700;color:#111827;letter-spacing:-1.14px">1m 38s</div>
<div class="tx" style="left:1798.5px;top:1510.4px;font-size:19.77px;line-height:19.77px;font-weight:400;color:#1e293b;-webkit-text-stroke:0.5px #1e293b;letter-spacing:0.80px">AI SCREENING</div>
<div class="tx" style="left:1798.5px;top:1540.3px;font-size:19.77px;line-height:19.77px;font-weight:400;color:#1e293b;-webkit-text-stroke:0.5px #1e293b;letter-spacing:0.80px">ADOPTION</div>
<div class="tx" style="left:1799.0px;top:1614.6px;font-size:45.64px;line-height:45.64px;font-weight:700;color:#111827;letter-spacing:-0.15px">44.4%</div>
<div class="tx" style="left:2207.6px;top:1510.4px;font-size:19.77px;line-height:19.77px;font-weight:400;color:#1e293b;-webkit-text-stroke:0.5px #1e293b;letter-spacing:0.80px">TIME TO INTERVIEW</div>
<div class="tx" style="left:2208.1px;top:1614.6px;font-size:45.64px;line-height:45.64px;font-weight:700;color:#111827;letter-spacing:-1.10px">410.4 min</div>
<div class="tx" style="left:2616.7px;top:1510.4px;font-size:19.77px;line-height:19.77px;font-weight:400;color:#1e293b;-webkit-text-stroke:0.5px #1e293b;letter-spacing:0.80px">TIME TO CANCEL</div>
<div class="tx" style="left:2616.2px;top:1614.6px;font-size:45.64px;line-height:45.64px;font-weight:700;color:#111827;letter-spacing:-1.43px">21.3 min</div>
<div class="tx" style="left:571.2px;top:1780.4px;font-size:19.77px;line-height:19.77px;font-weight:400;color:#1e293b;-webkit-text-stroke:0.5px #1e293b;letter-spacing:0.80px">JD COMPLETION</div>
<div class="tx" style="left:569.7px;top:1884.6px;font-size:45.64px;line-height:45.64px;font-weight:700;color:#111827;letter-spacing:-0.60px">70.0%</div>
<div class="tx" style="left:980.3px;top:1780.4px;font-size:19.77px;line-height:19.77px;font-weight:400;color:#1e293b;-webkit-text-stroke:0.5px #1e293b;letter-spacing:0.80px">REQUISITIONS —</div>
<div class="tx" style="left:980.3px;top:1810.3px;font-size:19.77px;line-height:19.77px;font-weight:400;color:#1e293b;-webkit-text-stroke:0.5px #1e293b;letter-spacing:0.80px">INTERVIEWING</div>
<div class="tx" style="left:980.8px;top:1884.6px;font-size:45.64px;line-height:45.64px;font-weight:700;color:#111827;letter-spacing:-0.60px">4</div>
<div class="tx" style="left:1389.4px;top:1780.4px;font-size:19.77px;line-height:19.77px;font-weight:400;color:#1e293b;-webkit-text-stroke:0.5px #1e293b;letter-spacing:0.80px">REQUISITIONS —</div>
<div class="tx" style="left:1389.4px;top:1810.3px;font-size:19.77px;line-height:19.77px;font-weight:400;color:#1e293b;-webkit-text-stroke:0.5px #1e293b;letter-spacing:0.80px">DRAFT</div>
<div class="tx" style="left:1388.9px;top:1884.6px;font-size:45.64px;line-height:45.64px;font-weight:700;color:#111827;letter-spacing:-0.60px">2</div>
<div class="tx" style="left:1798.5px;top:1780.4px;font-size:19.77px;line-height:19.77px;font-weight:400;color:#1e293b;-webkit-text-stroke:0.5px #1e293b;letter-spacing:0.80px">INTERVIEWS — NOT</div>
<div class="tx" style="left:1798.5px;top:1810.3px;font-size:19.77px;line-height:19.77px;font-weight:400;color:#1e293b;-webkit-text-stroke:0.5px #1e293b;letter-spacing:0.80px">STARTED</div>
<div class="tx" style="left:1798.0px;top:1884.6px;font-size:45.64px;line-height:45.64px;font-weight:700;color:#111827;letter-spacing:-0.60px">38</div>
<div class="tx" style="left:2207.6px;top:1780.4px;font-size:19.77px;line-height:19.77px;font-weight:400;color:#1e293b;-webkit-text-stroke:0.5px #1e293b;letter-spacing:0.80px">INTERVIEWS —</div>
<div class="tx" style="left:2207.6px;top:1810.3px;font-size:19.77px;line-height:19.77px;font-weight:400;color:#1e293b;-webkit-text-stroke:0.5px #1e293b;letter-spacing:0.80px">SCHEDULED (RAW)</div>
<div class="tx" style="left:2206.1px;top:1884.6px;font-size:45.64px;line-height:45.64px;font-weight:700;color:#111827;letter-spacing:-0.60px">7</div>
<div class="tx" style="left:2616.7px;top:1780.4px;font-size:19.77px;line-height:19.77px;font-weight:400;color:#1e293b;-webkit-text-stroke:0.5px #1e293b;letter-spacing:0.80px">INTERVIEWS — IN</div>
<div class="tx" style="left:2616.7px;top:1810.3px;font-size:19.77px;line-height:19.77px;font-weight:400;color:#1e293b;-webkit-text-stroke:0.5px #1e293b;letter-spacing:0.80px">PROGRESS</div>
<div class="tx" style="left:2616.2px;top:1884.6px;font-size:45.64px;line-height:45.64px;font-weight:700;color:#111827;letter-spacing:-0.60px">3</div>
</body></html>
